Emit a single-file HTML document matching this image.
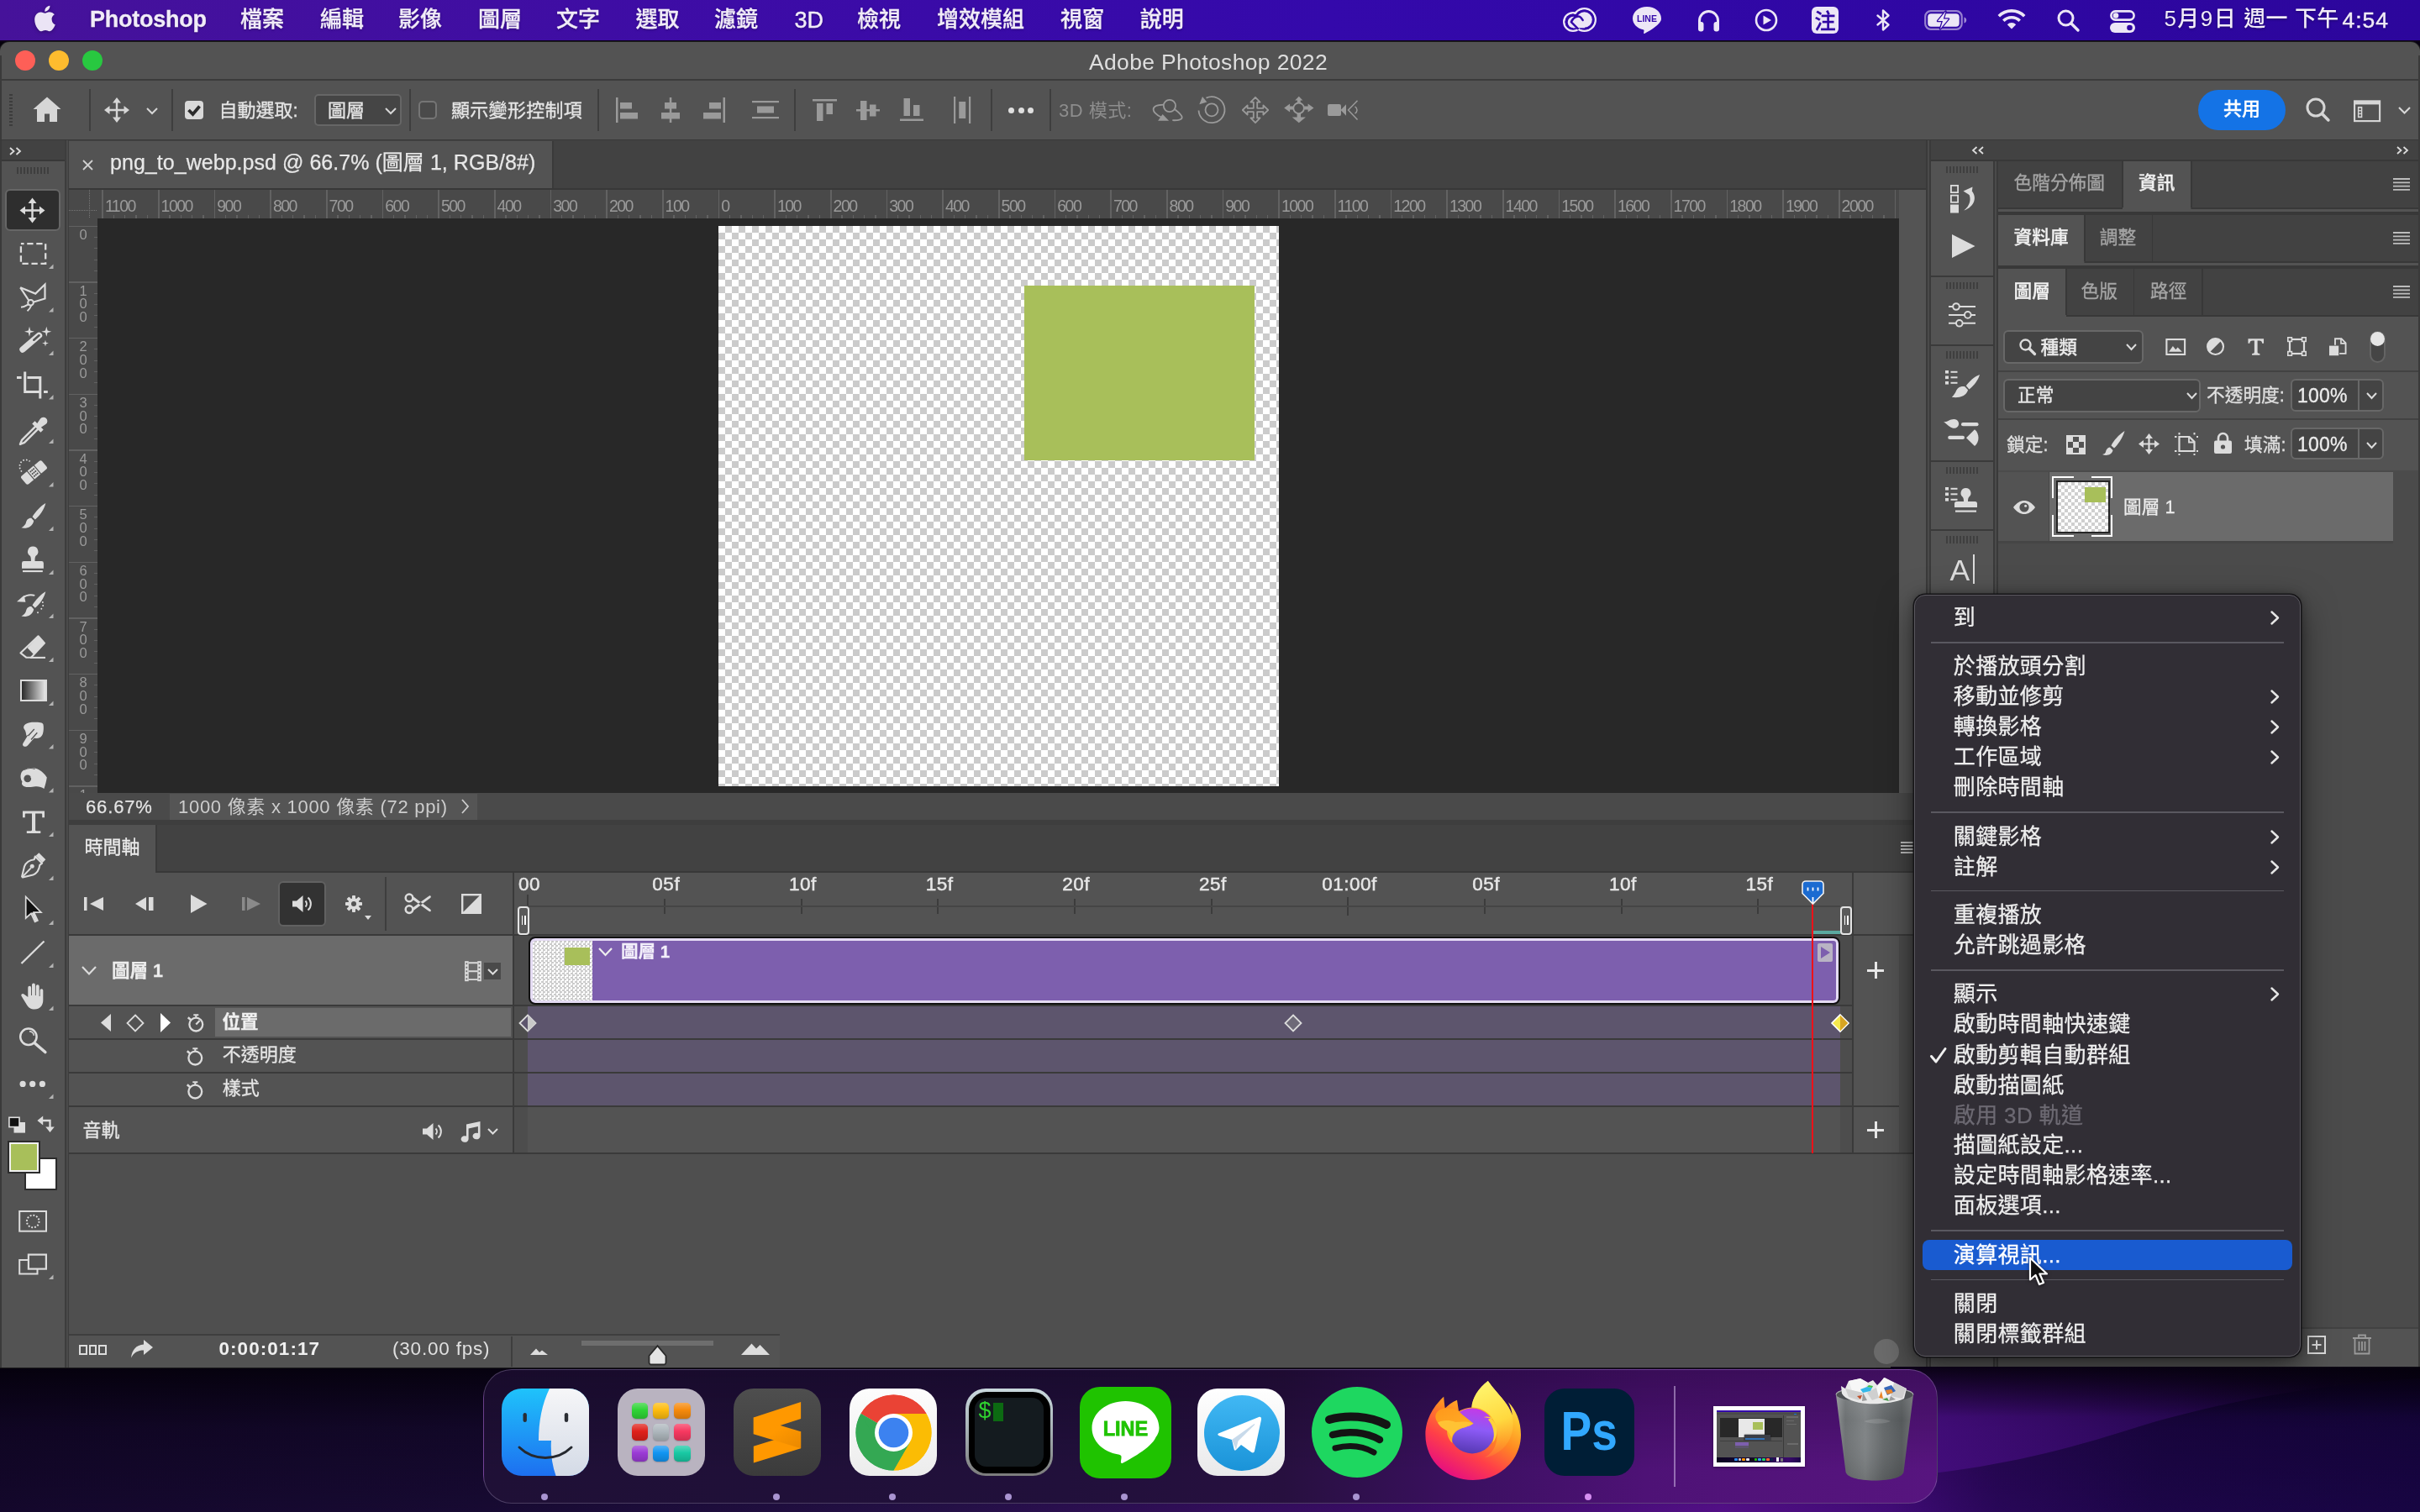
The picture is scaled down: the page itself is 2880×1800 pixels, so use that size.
<!DOCTYPE html>
<html lang="zh-Hant"><head><meta charset="utf-8"><title>Adobe Photoshop 2022</title>
<style>
html,body{margin:0;padding:0;background:#12061f;}
body{width:2880px;height:1800px;overflow:hidden;font-family:"Liberation Sans","Noto Sans CJK TC",sans-serif;}
#root{position:relative;will-change:transform;width:2880px;height:1800px;overflow:hidden;
 background:
  linear-gradient(to bottom, rgba(3,0,8,.85) 1627px, rgba(3,0,8,.25) 1700px, rgba(0,0,0,0) 1800px),
  linear-gradient(100deg,#120628 0%,#170a32 28%,#241046 45%,#3a0c66 62%,#520f86 74%,#3c0a72 82%,#22074f 90%,#1b0648 100%);
}
.a{position:absolute;box-sizing:border-box;}
.t{position:absolute;white-space:nowrap;display:block;}
svg{overflow:visible;}
.cjk{font-family:"Liberation Sans","Noto Sans CJK TC",sans-serif;-webkit-text-stroke:.28px currentColor;}
.chk{background-color:#fff;background-image:
 linear-gradient(45deg,#cbcbcb 25%,transparent 25%,transparent 75%,#cbcbcb 75%),
 linear-gradient(45deg,#cbcbcb 25%,transparent 25%,transparent 75%,#cbcbcb 75%);}
</style>
</head>
<body>
<div id="root">
<div class="a" style="left:0px;top:0px;width:2880px;height:48px;background:linear-gradient(to right,#46129a 0%,#3d0ca6 30%,#3409ab 55%,#2f07a3 80%,#2c069c 100%);"></div>
<div class="a" style="left:0px;top:48px;width:2880px;height:2px;background:#0d0418;"></div>
<svg class="a" style="left:39.8px;top:6px;filter:drop-shadow(0 1px 2px rgba(0,0,0,.3));" width="26" height="32" viewBox="1.2 2 24.6 29.2"><path fill="#ebe4f5" d="M21.6 17.6c0-3.6 3-5.3 3.100-5.400-1.700-2.500-4.300-2.800-5.200-2.800-2.200-.2-4.300 1.300-5.400 1.300s-2.900-1.300-4.700-1.200c-2.400 0-4.700 1.400-5.900 3.600-2.500 4.400-.6 10.800 1.800 14.400 1.200 1.700 2.600 3.700 4.500 3.600 1.800-.1 2.500-1.200 4.700-1.200s2.800 1.200 4.700 1.100c2-.03 3.200-1.800 4.400-3.500 1.400-2 1.900-3.900 2-4-.1 0-3.800-1.500-3.900-5.800zM18 6.700c1-1.200 1.700-2.900 1.500-4.600-1.400.1-3.200 1-4.200 2.200-.9 1-1.700 2.800-1.500 4.400 1.600.1 3.200-.8 4.200-2z"/></svg>
<span class="t " style="top:2.7px;height:40px;line-height:40px;font-size:27px;color:#f1ecf8;left:107px;font-weight:700;letter-spacing:-0.25px;text-shadow:0 1px 3px rgba(0,0,0,.35);-webkit-text-stroke:.3px #f1ecf8;">Photoshop</span>
<span class="t cjk" style="top:3.6px;height:39px;line-height:39px;font-size:26px;color:#f1ecf8;left:286px;font-weight:500;text-shadow:0 1px 3px rgba(0,0,0,.35);">檔案</span>
<span class="t cjk" style="top:3.6px;height:39px;line-height:39px;font-size:26px;color:#f1ecf8;left:381px;font-weight:500;text-shadow:0 1px 3px rgba(0,0,0,.35);">編輯</span>
<span class="t cjk" style="top:3.6px;height:39px;line-height:39px;font-size:26px;color:#f1ecf8;left:474px;font-weight:500;text-shadow:0 1px 3px rgba(0,0,0,.35);">影像</span>
<span class="t cjk" style="top:3.6px;height:39px;line-height:39px;font-size:26px;color:#f1ecf8;left:569px;font-weight:500;text-shadow:0 1px 3px rgba(0,0,0,.35);">圖層</span>
<span class="t cjk" style="top:3.6px;height:39px;line-height:39px;font-size:26px;color:#f1ecf8;left:662px;font-weight:500;text-shadow:0 1px 3px rgba(0,0,0,.35);">文字</span>
<span class="t cjk" style="top:3.6px;height:39px;line-height:39px;font-size:26px;color:#f1ecf8;left:756.5px;font-weight:500;text-shadow:0 1px 3px rgba(0,0,0,.35);">選取</span>
<span class="t cjk" style="top:3.6px;height:39px;line-height:39px;font-size:26px;color:#f1ecf8;left:850px;font-weight:500;text-shadow:0 1px 3px rgba(0,0,0,.35);">濾鏡</span>
<span class="t " style="top:3.5px;height:40px;line-height:40px;font-size:27px;color:#f1ecf8;left:945.5px;text-shadow:0 1px 3px rgba(0,0,0,.35);-webkit-text-stroke:.4px #f1ecf8;">3D</span>
<span class="t cjk" style="top:3.6px;height:39px;line-height:39px;font-size:26px;color:#f1ecf8;left:1020px;font-weight:500;text-shadow:0 1px 3px rgba(0,0,0,.35);">檢視</span>
<span class="t cjk" style="top:3.6px;height:39px;line-height:39px;font-size:26px;color:#f1ecf8;left:1115px;font-weight:500;text-shadow:0 1px 3px rgba(0,0,0,.35);">增效模組</span>
<span class="t cjk" style="top:3.6px;height:39px;line-height:39px;font-size:26px;color:#f1ecf8;left:1262px;font-weight:500;text-shadow:0 1px 3px rgba(0,0,0,.35);">視窗</span>
<span class="t cjk" style="top:3.6px;height:39px;line-height:39px;font-size:26px;color:#f1ecf8;left:1356.7px;font-weight:500;text-shadow:0 1px 3px rgba(0,0,0,.35);">說明</span>
<span class="t " style="top:3.0px;height:39px;line-height:39px;font-size:26px;color:#f1ecf8;left:2575.4px;font-weight:500;letter-spacing:1.5px;text-shadow:0 1px 3px rgba(0,0,0,.35);font-family:'Liberation Sans','Noto Sans CJK TC',sans-serif;">5月9日</span>
<span class="t " style="top:3.0px;height:39px;line-height:39px;font-size:26px;color:#f1ecf8;left:2670.3px;font-weight:500;letter-spacing:0.3px;text-shadow:0 1px 3px rgba(0,0,0,.35);font-family:'Liberation Sans','Noto Sans CJK TC',sans-serif;">週一</span>
<span class="t " style="top:3.0px;height:39px;line-height:39px;font-size:26px;color:#f1ecf8;left:2730.9px;font-weight:500;letter-spacing:0.3px;text-shadow:0 1px 3px rgba(0,0,0,.35);font-family:'Liberation Sans','Noto Sans CJK TC',sans-serif;">下午</span>
<span class="t " style="top:3.5px;height:40px;line-height:40px;font-size:26.5px;color:#f1ecf8;left:2787.4px;letter-spacing:1px;text-shadow:0 1px 3px rgba(0,0,0,.35);font-family:'Liberation Sans','Noto Sans CJK TC',sans-serif;-webkit-text-stroke:.4px #f1ecf8;">4:54</span>
<svg class="a" style="left:1859.5px;top:8.7px;" width="40" height="29.5" viewBox="0 0 40 29.5"><circle cx="12" cy="17" r="10.750" fill="none" stroke="#ece6f6" stroke-width="2.500"/><circle cx="25.500" cy="14.500" r="13.250" fill="none" stroke="#ece6f6" stroke-width="2.500"/><circle cx="12" cy="17" r="9.500" fill="#3308a8"/><circle cx="25.500" cy="14.500" r="12" fill="#3308a8"/><circle cx="12.500" cy="17.500" r="6.800" fill="#ece6f6"/><circle cx="25.500" cy="14.500" r="9.300" fill="#ece6f6"/><path d="M12 17h14v7.300H12z" fill="#ece6f6"/><path d="M9.800 17.200C12 11.500 18.500 8.500 21.500 12l2.200 3M9.800 17.200l8 8" fill="none" stroke="#3308a8" stroke-width="2.400" stroke-linecap="round"/></svg>
<svg class="a" style="left:1942px;top:7px;" width="36" height="34" viewBox="0 0 36 34"><path fill="#ece6f6" d="M18 1C8.600 1 1 7.200 1 14.900c0 6.300 5.200 11.600 12.400 13.300.9.200 1.300.600 1.100 1.500l-.4 2.600c-.1.700.5 1 1.100.6 3-1.700 16-8.200 19.300-15.100.4-1 .5-1.900.5-2.900C35 7.200 27.400 1 18 1z"/><text x="18" y="19" text-anchor="middle" font-family="Liberation Sans, sans-serif" font-weight="700" font-size="10.500" fill="#3409ab">LINE</text></svg>
<svg class="a" style="left:2019px;top:11px;" width="29" height="27" viewBox="0 0 29 27"><g fill="none" stroke="#ece6f6" stroke-width="3"><path d="M3.500 18V13.500a11 11 0 0 1 22 0V18"/></g><rect x="2" y="15" width="6.500" height="11.500" rx="3" fill="#ece6f6"/><rect x="20.500" y="15" width="6.500" height="11.500" rx="3" fill="#ece6f6"/></svg>
<svg class="a" style="left:2088px;top:10px;" width="28" height="28" viewBox="0 0 28 28"><circle cx="14" cy="14" r="12" fill="none" stroke="#ece6f6" stroke-width="2.600"/><path d="M10.500 8.500l9.500 5.500-9.500 5.500z" fill="#ece6f6"/></svg>
<div class="a" style="left:2156px;top:8px;width:32px;height:32px;background:#ece6f6;border-radius:6px;"></div>
<span class="t cjk" style="top:5.6px;height:38px;line-height:38px;font-size:25.5px;color:#2f07a3;left:2156px;font-weight:500;width:32px;text-align:center;">注</span>
<svg class="a" style="left:2232px;top:10px;" width="18" height="28" viewBox="0 0 18 28"><path fill="none" stroke="#ece6f6" stroke-width="2.400" stroke-linejoin="round" stroke-linecap="round" d="M2.500 8.500l13 11-6.500 6V2.500l6.500 6-13 11"/></svg>
<svg class="a" style="left:2290px;top:12px;" width="52" height="24" viewBox="0 0 52 24"><rect x="1.200" y="1.200" width="43.500" height="21.600" rx="6.500" fill="none" stroke="#ece6f6" stroke-opacity=".55" stroke-width="2.200"/><rect x="4.200" y="4.200" width="37.500" height="15.600" rx="4" fill="#ece6f6"/><path d="M47.500 8.500c2 .6 2.700 2 2.700 3.500s-.7 2.900-2.700 3.500z" fill="#ece6f6" fill-opacity=".6"/><path d="M25.500 1.500l-9.500 11.500h6l-3 9.500 10-12h-6.200z" fill="#3007a2" stroke="#3007a2" stroke-width="2.500" stroke-linejoin="round"/><path d="M25.500 1.500l-9.500 11.500h6l-3 9.500 10-12h-6.200z" fill="#ece6f6"/></svg>
<svg class="a" style="left:2377px;top:10px;" width="34" height="25" viewBox="0 0 34 25"><g fill="none" stroke="#ece6f6" stroke-width="3.600" stroke-linecap="butt"><path d="M1.800 9.200a21.500 21.500 0 0 1 30.400 0"/><path d="M7.300 14.800a13.700 13.700 0 0 1 19.400 0"/></g><path d="M17 24.500l-5.200-5.300a7.300 7.300 0 0 1 10.400 0z" fill="#ece6f6"/></svg>
<svg class="a" style="left:2448px;top:11px;" width="27" height="27" viewBox="0 0 27 27"><circle cx="10.500" cy="10.500" r="8.500" fill="none" stroke="#ece6f6" stroke-width="3"/><path d="M17 17l8 8" stroke="#ece6f6" stroke-width="3.400" stroke-linecap="round"/></svg>
<svg class="a" style="left:2511px;top:12px;" width="30" height="27" viewBox="0 0 30 27"><rect x="1.400" y="1.400" width="27.200" height="10.200" rx="5.100" fill="none" stroke="#ece6f6" stroke-width="2.600"/><circle cx="7" cy="6.500" r="3.300" fill="#ece6f6"/><rect x="0" y="15" width="30" height="12" rx="6" fill="#ece6f6"/><circle cx="23.500" cy="21" r="3.300" fill="#3007a2"/></svg>
<div class="a" style="left:0px;top:50px;width:2880px;height:1578px;background:#535353;border-radius:11px 11px 0 0;box-shadow:0 0 0 1px #1c1c1c;"></div>
<div class="a" style="left:0px;top:66px;width:2px;height:1562px;background:#3a3a3a;"></div>
<div class="a" style="left:2878px;top:66px;width:2px;height:1562px;background:#3a3a3a;"></div>
<div class="a" style="left:0px;top:94px;width:2880px;height:2px;background:#3b3b3b;"></div>
<div class="a" style="left:0px;top:165.6px;width:2880px;height:2px;background:#383838;"></div>
<div class="a" style="left:18px;top:60px;width:24px;height:24px;background:#fe5f57;border-radius:50%;"></div>
<div class="a" style="left:58px;top:60px;width:24px;height:24px;background:#febc2e;border-radius:50%;"></div>
<div class="a" style="left:98px;top:60px;width:24px;height:24px;background:#28c840;border-radius:50%;"></div>
<span class="t " style="top:54.0px;height:40px;line-height:40px;font-size:26.5px;color:#dedede;left:0px;letter-spacing:0.35px;width:2876px;text-align:center;">Adobe Photoshop 2022</span>
<div class="a" style="left:11px;top:112px;width:4px;height:38px;background:repeating-linear-gradient(to bottom,#3c3c3c 0 2px,transparent 2px 4px);"></div>
<svg class="a" style="left:39px;top:115px;" width="34" height="31" viewBox="0 0 34 31"><path fill="#d6d6d6" d="M17 0.500L0.500 15h4.500v15h9v-9.500h6V30h9V15h4.500z"/></svg>
<div class="a" style="left:106px;top:106px;width:2px;height:50px;background:#3e3e3e;"></div>
<svg class="a" style="left:124px;top:116px;" width="30" height="30" viewBox="0 0 30 30"><g stroke="#d6d6d6" stroke-width="2.400" fill="none"><path d="M15 4v22M4 15h22"/></g><path fill="#d6d6d6" d="M15 0l5 6.500H10zM15 30l5-6.500H10zM0 15l6.500-5v10zM30 15l-6.500-5v10z"/></svg>
<svg class="a" style="left:174px;top:128px;" width="14" height="9" viewBox="0 0 14 9"><path d="M1 1l6 6 6-6" fill="none" stroke="#d6d6d6" stroke-width="2"/></svg>
<div class="a" style="left:204px;top:106px;width:2px;height:50px;background:#3e3e3e;"></div>
<div class="a" style="left:220px;top:120px;width:22px;height:22px;background:#d9d9d9;border-radius:4px;"></div>
<svg class="a" style="left:223px;top:124px;" width="16" height="14" viewBox="0 0 16 14"><path d="M1.500 7l5 5L14.500 2.500" fill="none" stroke="#2b2b2b" stroke-width="3.800"/></svg>
<span class="t cjk" style="top:115.0px;height:33px;line-height:33px;font-size:22px;color:#e6e6e6;left:260.5px;">自動選取:</span>
<div class="a" style="left:374px;top:112px;width:104px;height:38px;background:#454545;border:2px solid #666;border-radius:5px;"></div>
<span class="t cjk" style="top:115.0px;height:33px;line-height:33px;font-size:22px;color:#e6e6e6;left:390px;">圖層</span>
<svg class="a" style="left:458px;top:128px;" width="14" height="9" viewBox="0 0 14 9"><path d="M1 1l6 6 6-6" fill="none" stroke="#d6d6d6" stroke-width="2"/></svg>
<div class="a" style="left:487px;top:106px;width:2px;height:50px;background:#3e3e3e;"></div>
<div class="a" style="left:498px;top:120px;width:22px;height:22px;background:#4a4a4a;border:2px solid #757575;border-radius:5px;"></div>
<span class="t cjk" style="top:115.0px;height:33px;line-height:33px;font-size:22px;color:#e6e6e6;left:537px;letter-spacing:0.3px;">顯示變形控制項</span>
<div class="a" style="left:711px;top:106px;width:2px;height:50px;background:#3e3e3e;"></div>
<svg class="a" style="left:733px;top:116px;" width="27" height="30" viewBox="0 0 27 30"><rect x="0" y="0" width="2.500" height="30" fill="#9a9a9a"/><rect x="5" y="6" width="14" height="7.500" fill="#9a9a9a"/><rect x="5" y="18" width="21" height="7.500" fill="#9a9a9a"/></svg>
<svg class="a" style="left:787px;top:116px;" width="22" height="30" viewBox="0 0 22 30"><rect x="9.800" y="0" width="2.500" height="30" fill="#9a9a9a"/><rect x="4" y="6" width="14" height="7.500" fill="#9a9a9a"/><rect x="0" y="18" width="22" height="7.500" fill="#9a9a9a"/></svg>
<svg class="a" style="left:837px;top:116px;" width="27" height="30" viewBox="0 0 27 30"><rect x="23.500" y="0" width="2.500" height="30" fill="#9a9a9a"/><rect x="7" y="6" width="14" height="7.500" fill="#9a9a9a"/><rect x="0" y="18" width="21" height="7.500" fill="#9a9a9a"/></svg>
<svg class="a" style="left:895px;top:120px;" width="32" height="22" viewBox="0 0 32 22"><rect x="0" y="0" width="32" height="2.200" fill="#9a9a9a"/><rect x="0" y="19" width="32" height="2.200" fill="#9a9a9a"/><rect x="6" y="6.500" width="20" height="8" fill="#9a9a9a"/></svg>
<div class="a" style="left:945px;top:106px;width:2px;height:50px;background:#3e3e3e;"></div>
<svg class="a" style="left:967px;top:118px;" width="29" height="27" viewBox="0 0 29 27"><rect x="0" y="0" width="29" height="2.500" fill="#9a9a9a"/><rect x="5" y="5" width="7.500" height="21" fill="#9a9a9a"/><rect x="16.500" y="5" width="7.500" height="13" fill="#9a9a9a"/></svg>
<svg class="a" style="left:1019px;top:120px;" width="28" height="23" viewBox="0 0 28 23"><rect x="0" y="10" width="28" height="2.500" fill="#9a9a9a"/><rect x="5" y="0" width="7.500" height="23" fill="#9a9a9a"/><rect x="16" y="4.500" width="7.500" height="14" fill="#9a9a9a"/></svg>
<svg class="a" style="left:1071px;top:117px;" width="28" height="27" viewBox="0 0 28 27"><rect x="0" y="24.500" width="28" height="2.500" fill="#9a9a9a"/><rect x="4.500" y="0" width="7.500" height="21" fill="#9a9a9a"/><rect x="16" y="8" width="7.500" height="13" fill="#9a9a9a"/></svg>
<svg class="a" style="left:1135px;top:115px;" width="20" height="32" viewBox="0 0 20 32"><rect x="0" y="0" width="2.200" height="32" fill="#9a9a9a"/><rect x="18" y="0" width="2.200" height="32" fill="#9a9a9a"/><rect x="6.200" y="6" width="8" height="20" fill="#9a9a9a"/></svg>
<div class="a" style="left:1179px;top:106px;width:2px;height:50px;background:#3e3e3e;"></div>
<div class="a" style="left:1200.0px;top:127.5px;width:7px;height:7px;background:#e0e0e0;border-radius:50%;"></div>
<div class="a" style="left:1211.5px;top:127.5px;width:7px;height:7px;background:#e0e0e0;border-radius:50%;"></div>
<div class="a" style="left:1223.0px;top:127.5px;width:7px;height:7px;background:#e0e0e0;border-radius:50%;"></div>
<div class="a" style="left:1249px;top:106px;width:2px;height:50px;background:#3e3e3e;"></div>
<span class="t " style="top:114.5px;height:33px;line-height:33px;font-size:22px;color:#8d8d8d;left:1260px;letter-spacing:0.5px;">3D 模式:</span>
<svg class="a" style="left:1360px;top:105px;" width="270" height="50" viewBox="1360 105 270 50"><circle cx="1391.900" cy="126" r="7.100" fill="none" stroke="#9a9a9a" stroke-width="1.800"/><path d="M1384.800 124.600C1377 124.800 1372.600 126.800 1372.600 130.200c0 3.400 4 6.600 9.400 9.300M1398.200 130.300c4.700 3.600 8.500 6.700 8.500 9.500 0 2.800-4.500 3.700-11.400 3.400" fill="none" stroke="#9a9a9a" stroke-width="1.800"/><path d="M1383.600 136.100l7.500 7.600h-13z" fill="#9a9a9a"/><circle cx="1442" cy="130.800" r="7.500" fill="none" stroke="#9a9a9a" stroke-width="1.800"/><path d="M1435.500 116.600A15.500 15.500 0 1 1 1426.500 131.500" fill="none" stroke="#9a9a9a" stroke-width="1.800"/><path d="M1431 115l5.300 6.400-9 2.900z" fill="#9a9a9a"/><path d="M1494.0 115.8L1499.6 121.6L1496.2 121.6L1496.2 128.8L1503.4 128.8L1503.4 125.4L1509.2 131.0L1503.4 136.6L1503.4 133.2L1496.2 133.2L1496.2 140.4L1499.6 140.4L1494.0 146.2L1488.4 140.4L1491.8 140.4L1491.8 133.2L1484.6 133.2L1484.6 136.6L1478.8 131.0L1484.6 125.4L1484.6 128.8L1491.8 128.8L1491.8 121.6L1488.4 121.6z" fill="none" stroke="#9a9a9a" stroke-width="1.800" stroke-linejoin="round"/><path d="M1545.800 114.800l4.600 4.600h-2.700v4h-3.800v-4h-2.700zM1528.200 128.500l6.900-5v3.100h4.500v3.800h-4.500v3.100zM1563.500 128.500l-6.900-5v3.100h-4.500v3.800h4.500v3.100zM1545.800 146.300l-8.100-6.700h5.900v-4.500h4.400v4.500h5.900z" fill="#9a9a9a"/><circle cx="1545.600" cy="128.800" r="6.300" fill="#535353" stroke="#9a9a9a" stroke-width="1.800"/><rect x="1580" y="124.100" width="16" height="14" rx="2.200" fill="#9a9a9a"/><path d="M1595.500 131l6.500-6.800v13.600z" fill="#9a9a9a"/><path d="M1615.500 119.700l-11 11.300 11 11.600M1612.500 126.800a4.800 4.800 0 0 1 0 8.400" fill="none" stroke="#9a9a9a" stroke-width="1.500"/></svg>
<div class="a" style="left:2616px;top:107px;width:104px;height:48px;background:#1473e6;border-radius:24px;"></div>
<span class="t cjk" style="top:112.8px;height:33px;line-height:33px;font-size:22px;color:#fff;left:2616px;font-weight:500;width:104px;text-align:center;">共用</span>
<svg class="a" style="left:2743.5px;top:116px;" width="30" height="30" viewBox="0 0 30 30"><circle cx="12" cy="12" r="10" fill="none" stroke="#d6d6d6" stroke-width="3"/><path d="M19.500 19.500l7.400 7.400" stroke="#d6d6d6" stroke-width="3.600" stroke-linecap="round"/></svg>
<svg class="a" style="left:2800.7px;top:119px;" width="32.2" height="26.5" viewBox="0 0 33 26.5"><rect x="1.100" y="1.100" width="30.800" height="24.300" fill="none" stroke="#d6d6d6" stroke-width="2.200"/><rect x="1" y="1" width="31" height="4.200" fill="#d6d6d6"/><rect x="5" y="7.800" width="5.600" height="13.600" fill="#d6d6d6"/><rect x="6.600" y="9.600" width="2.400" height="2.400" fill="#535353"/><rect x="6.600" y="13.400" width="2.400" height="2.400" fill="#535353"/><rect x="6.600" y="17.200" width="2.400" height="2.400" fill="#535353"/></svg>
<svg class="a" style="left:2854px;top:126.8px;" width="15" height="9" viewBox="0 0 15 9"><path d="M1 1l6.500 6.500L14 1" fill="none" stroke="#d6d6d6" stroke-width="2.200"/></svg>
<div class="a" style="left:0px;top:167px;width:2px;height:1461px;background:#3a3a3a;"></div>
<div class="a" style="left:2px;top:167px;width:75px;height:24px;background:#424242;"></div>
<div class="a" style="left:2px;top:190px;width:75px;height:2px;background:#383838;"></div>
<div class="a" style="left:77px;top:167px;width:5px;height:1461px;background:#3d3d3d;"></div>
<div class="a" style="left:78.5px;top:167px;width:2px;height:1461px;background:#4a4a4a;"></div>
<svg class="a" style="left:11px;top:175px;" width="15" height="10" viewBox="0 0 15 10"><path d="M1 1l4.500 4-4.500 4M8.500 1l4.500 4-4.500 4" fill="none" stroke="#dcdcdc" stroke-width="1.800"/></svg>
<div class="a" style="left:20px;top:199px;width:38px;height:8px;background:repeating-linear-gradient(to right,#3e3e3e 0 2px,transparent 2px 4px);"></div>
<div class="a" style="left:6px;top:225px;width:66px;height:50px;background:#2e2e2e;border:2px solid #666;border-radius:6px;"></div>
<svg class="a" style="left:0px;top:220px;" width="80" height="1320" viewBox="0 220 80 1320"><g stroke="#dcdcdc" stroke-width="2.400" fill="none"><path d="M38.500 239.500v22M27.500 250.500h22"/></g><path fill="#dcdcdc" d="M38.500 235.500l5 6.500h-10zM38.500 265.500l5-6.500h-10zM23.500 250.500l6.500-5v10zM53.500 250.500l-6.500-5v10z"/><rect x="24.900" y="290.200" width="29.300" height="23.600" fill="none" stroke="#dcdcdc" stroke-width="2.300" stroke-dasharray="7.300 3.700" stroke-dashoffset="3.650"/><path d="M24.200 342.300l18 7.300L53.500 338.500V355.500L38.500 360" fill="none" stroke="#dcdcdc" stroke-width="2.200" stroke-linejoin="miter"/><path d="M24.200 342.300L34.500 358" fill="none" stroke="#dcdcdc" stroke-width="2.200"/><circle cx="36.500" cy="360.300" r="3.300" fill="#535353" stroke="#dcdcdc" stroke-width="2"/><path d="M33.800 362.300c-2.500 1.500-5.500 3-8.800 3.500M37.300 363.500c-1 2.500-2.500 5-4.800 6.700" fill="none" stroke="#dcdcdc" stroke-width="2"/><path d="M27 416L46.500 399.300" stroke="#dcdcdc" stroke-width="7.400" stroke-linecap="round"/><path d="M40.300 404.700l6.200-5.400" stroke="#535353" stroke-width="2.600" stroke-linecap="round"/><path d="M35.00 388.80L36.27 393.53L41.00 394.80L36.27 396.07L35.00 400.80L33.73 396.07L29.00 394.80L33.73 393.53z" fill="#dcdcdc"/><path d="M55.30 388.80L56.57 393.53L61.30 394.80L56.57 396.07L55.30 400.80L54.03 396.07L49.30 394.80L54.03 393.53z" fill="#dcdcdc"/><path d="M54.00 404.70L54.83 407.77L57.90 408.60L54.83 409.43L54.00 412.50L53.17 409.43L50.10 408.60L53.17 407.77z" fill="#dcdcdc"/><path d="M20 449.500h5.600M29.700 442.500v24h18.100M32.500 449.500h15.300v25M52 466.500h4.800" fill="none" stroke="#dcdcdc" stroke-width="3" stroke-linecap="butt" stroke-linejoin="miter"/><g transform="translate(39.500 510) scale(1.16) translate(-39.700 -510)"><path d="M42.500 507.500L28.300 521.700a2.400 2.400 0 0 0-.7 1.300l-1.300 3.300 3.300-1.300a2.400 2.400 0 0 0 1.300-.7L45.100 510.100" fill="none" stroke="#dcdcdc" stroke-width="2.100" stroke-linejoin="round"/><path d="M38.600 505.300l2.800-2.800 2.400 2.400 3.200-4.800a3.900 3.900 0 0 1 6 -.4 3.900 3.900 0 0 1-.4 6l-4.800 3.200 2.400 2.400-2.800 2.800z" fill="#dcdcdc"/></g><g transform="rotate(-40 40.500 562.500)"><rect x="24.500" y="556" width="32" height="13" rx="2.600" fill="#dcdcdc"/><rect x="34.700" y="555" width="11.600" height="15" fill="#535353"/><rect x="35.900" y="556" width="9.200" height="13" fill="#dcdcdc"/><g fill="#535353"><circle cx="38.100" cy="559" r="1.050"/><circle cx="40.500" cy="559" r="1.050"/><circle cx="42.900" cy="559" r="1.050"/><circle cx="38.100" cy="562.500" r="1.050"/><circle cx="40.500" cy="562.500" r="1.050"/><circle cx="42.900" cy="562.500" r="1.050"/><circle cx="38.100" cy="566" r="1.050"/><circle cx="40.500" cy="566" r="1.050"/><circle cx="42.900" cy="566" r="1.050"/></g></g><path d="M26 561.500c-3.500-3.500-3.500-9 0-12.300 2.800-2.500 7-2.300 9.600.200" fill="none" stroke="#dcdcdc" stroke-width="1.700" stroke-dasharray="1.700 2.100"/><g transform="translate(0 0)"><path d="M54.300 599c-5 2.500-12.500 10.500-15.800 16.300l3.300 3.100c5.200-4 11-12.200 12.500-19.400z" fill="#dcdcdc"/><path d="M37.300 616.800c-3.600-.3-5.600 2.200-6.300 5.200-.5 2.400-2.500 4.500-5.600 6.300 5.800 1.300 13.300-.6 14.800-8.400z" fill="#dcdcdc"/></g><path d="M39.200 650.500a6.100 6.100 0 0 1 3.700 11c-1 .9-1.400 2.600-1.400 4.700v1.800H49.500a2.400 2.400 0 0 1 2.400 2.400v6.400H26v-6.400a2.400 2.400 0 0 1 2.400-2.400H36.900v-1.800c0-2.100-.4-3.800-1.400-4.700a6.100 6.100 0 0 1 3.700-11z" fill="#dcdcdc"/><rect x="27" y="679" width="23.800" height="2.100" fill="#dcdcdc"/><g transform="translate(0 105.3)"><path d="M54.300 599c-5 2.500-12.500 10.500-15.800 16.300l3.300 3.100c5.200-4 11-12.200 12.500-19.400z" fill="#dcdcdc"/><path d="M37.300 616.800c-3.600-.3-5.600 2.200-6.300 5.200-.5 2.400-2.500 4.500-5.600 6.300 5.800 1.300 13.300-.6 14.800-8.400z" fill="#dcdcdc"/></g><path d="M24.500 714.500c3-5 10-7.500 16.800-5.600" fill="none" stroke="#dcdcdc" stroke-width="2"/><path d="M20 716.300l8.800-7.600 1.600 8z" fill="#dcdcdc"/><g fill="#dcdcdc"><circle cx="50.800" cy="717" r="1"/><circle cx="51.200" cy="721" r="1"/><circle cx="49.300" cy="724.800" r="1"/><circle cx="45" cy="729.300" r="1"/></g><path d="M45.500 757.300l7.500 8.300L37 782.800H31.500L24.500 777.300z" fill="none" stroke="#dcdcdc" stroke-width="2.100" stroke-linejoin="round"/><path d="M45.500 757.300l7.500 8.300-12.800 13.600-7.600-8z" fill="#dcdcdc"/><path d="M36 782.900h18" stroke="#dcdcdc" stroke-width="2.100"/><path d="M30.500 862c2.300-1.600 6.500-2.200 10.500-2.200 5.500 0 10 .3 10.500 2.700.6 2.900.6 7.500-.6 11.300-1 3-3.500 5-7 5.300l-3.400-.4-6.700 7.800c-1.300 1.500-3 2.800-5 2.200-1.800-.6-2.300-2.600-1.300-4l6.200-10.200-2.300 1.600c-.5-3.200-.6-5.800-2.700-8.300-1.300-1.600-.4-4.400 1.800-5.800z" fill="#dcdcdc"/><path d="M33.500 876l7.300-8M37 880.500l7.300-8.300" fill="none" stroke="#535353" stroke-width="1.300"/><path d="M25 921c1.300-3.800 5.700-6.700 11.500-7 6.700-.4 13.500 2.800 19.300 11.400-.8 4.600-1.700 8.800-3.400 13.600-3.400-2.700-7.400-3.200-12-2.600-5.400.7-10.600 1.600-13.300-1.300-1.500-1.600-1.300-3.200-.6-4.400-2-2.700-2.500-6.300-1.500-9.700z" fill="#dcdcdc"/><circle cx="32.800" cy="926.800" r="4.400" fill="#535353"/><path d="M28.500 916.500c4-2 9-2.500 13-1" fill="none" stroke="#535353" stroke-width="1.100"/><path d="M36.800 925c2.300 1.300 3.500 3.400 2.600 6.500" fill="none" stroke="#dcdcdc" stroke-width="2"/><path d="M27 965.500h26v7.800h-2.800v-3.600c0-.8-.4-1.200-1.200-1.200H42.100v19.500c0 .8.400 1.200 1.200 1.200h5v2.900H31.800v-2.900h5c.8 0 1.200-.4 1.200-1.200v-19.500H31c-.8 0-1.200.4-1.200 1.200v3.600H27z" fill="#dcdcdc"/><path d="M41.800 1019.500l8.300 8.200-2.800 2.200c-.7 5.500-3.600 9.800-8 11.700l-12.300 2.900-.9-.9 3-12.300c1.900-4.400 6.100-7.300 11.600-8z" fill="none" stroke="#dcdcdc" stroke-width="2.100" stroke-linejoin="round"/><path d="M42.600 1018.700l3.700-3.500 8 8-3.600 3.700z" fill="#dcdcdc"/><path d="M27 1043.500l9.800-10.200" stroke="#dcdcdc" stroke-width="1.900"/><circle cx="38.200" cy="1031.300" r="2.500" fill="#dcdcdc"/><path d="M30.700 1067.500v25.500l6.300-5.600 4.600 10 3.300-1.600-4.600-9.700h8.600z" fill="#111" stroke="#dcdcdc" stroke-width="1.700" stroke-linejoin="miter"/><path d="M37.500 1086.800l4.300 10.200 2.700-1.300-4.400-9.600z" fill="#dcdcdc"/><path d="M25.500 1147l27-26.500" stroke="#dcdcdc" stroke-width="2.300"/><path d="M33.300 1187v-11.300a1.900 1.900 0 0 1 3.800 0v9.300h.9v-12.600a1.950 1.950 0 0 1 3.900 0V1185h.9v-10.800a1.950 1.950 0 0 1 3.900 0V1186h.9v-7a1.850 1.850 0 0 1 3.700 0V1190.500c0 6.700-4 11-10 11-4.700 0-7.700-2-10-6.300l-5.800-9.400c-.9-1.900 1.200-3.700 3-2.200z" fill="#dcdcdc"/><circle cx="33.900" cy="1234.300" r="9.700" fill="none" stroke="#dcdcdc" stroke-width="2.500"/><path d="M41.500 1242l12.300 10.500" stroke="#dcdcdc" stroke-width="3.600" stroke-linecap="round"/><path d="M35 1227.800c3 .3 5 2.300 5.400 5" fill="none" stroke="#dcdcdc" stroke-width="1.400"/><circle cx="27.1" cy="1290.400" r="3.600" fill="#dcdcdc"/><circle cx="38.7" cy="1290.400" r="3.600" fill="#dcdcdc"/><circle cx="50.4" cy="1290.400" r="3.600" fill="#dcdcdc"/><path d="M63.500 314.4v5.500h-5.500z" fill="#b4b4b4"/><path d="M63.500 365.9v5.500h-5.500z" fill="#b4b4b4"/><path d="M63.500 417.4v5.500h-5.500z" fill="#b4b4b4"/><path d="M63.500 469.9v5.500h-5.500z" fill="#b4b4b4"/><path d="M63.500 522.4v5.500h-5.500z" fill="#b4b4b4"/><path d="M63.500 573.9v5.500h-5.500z" fill="#b4b4b4"/><path d="M63.500 626.4v5.500h-5.500z" fill="#b4b4b4"/><path d="M63.500 678.4v5.500h-5.500z" fill="#b4b4b4"/><path d="M63.500 730.4v5.500h-5.500z" fill="#b4b4b4"/><path d="M63.500 782.4v5.500h-5.500z" fill="#b4b4b4"/><path d="M63.500 834.4v5.500h-5.500z" fill="#b4b4b4"/><path d="M63.500 885.9v5.500h-5.500z" fill="#b4b4b4"/><path d="M63.500 937.9v5.500h-5.500z" fill="#b4b4b4"/><path d="M63.500 990.4v5.500h-5.500z" fill="#b4b4b4"/><path d="M63.500 1042.4v5.500h-5.500z" fill="#b4b4b4"/><path d="M63.500 1095.4v5.500h-5.500z" fill="#b4b4b4"/><path d="M63.500 1146.4v5.500h-5.500z" fill="#b4b4b4"/><path d="M63.500 1197.4v5.500h-5.500z" fill="#b4b4b4"/><path d="M63.500 1302.4v5.500h-5.500z" fill="#b4b4b4"/><path d="M63.500 1517.4v5.500h-5.500z" fill="#b4b4b4"/><rect x="16.500" y="1336" width="13.500" height="12.600" fill="#dedede"/><rect x="10.900" y="1330.300" width="12.100" height="11.300" fill="#111" stroke="#dedede" stroke-width="1.600"/><path d="M50 1334h9.500v9" fill="none" stroke="#dcdcdc" stroke-width="2.300"/><path d="M44.400 1334l6.800-5.500v11zM59.500 1348l-5.300-6.500h10.600z" fill="#dcdcdc"/><rect x="23.200" y="1442" width="31.800" height="23.700" fill="none" stroke="#dcdcdc" stroke-width="2"/><circle cx="39.200" cy="1454" r="7.300" fill="none" stroke="#dcdcdc" stroke-width="2" stroke-dasharray="1.900 1.920"/><rect x="23.200" y="1500" width="21.300" height="16.500" fill="none" stroke="#dcdcdc" stroke-width="2"/><rect x="33.900" y="1493.600" width="21" height="17" fill="#535353" stroke="#dcdcdc" stroke-width="2.200"/></svg>
<div class="a" style="left:24px;top:809px;width:31.5px;height:25.5px;background:linear-gradient(to right,#2a2a2a,#e6e6e6);border:2px solid #dcdcdc;"></div>
<div class="a" style="left:28.6px;top:1378px;width:39.2px;height:39.4px;background:#fff;border:2px solid #2c2c2c;"></div>
<div class="a" style="left:8.5px;top:1358px;width:39.2px;height:39.2px;background:#a8bf5a;border:2px solid #2c2c2c;box-shadow:inset 0 0 0 2px #f0f0f0;"></div>
<div class="a" style="left:82px;top:167px;width:2210px;height:58px;background:#424242;"></div>
<div class="a" style="left:82px;top:168px;width:577px;height:56px;background:#535353;border-right:2px solid #3a3a3a;"></div>
<div class="a" style="left:82px;top:224px;width:2210px;height:2px;background:#383838;"></div>
<svg class="a" style="left:98px;top:190px;" width="13" height="13" viewBox="0 0 13 13"><path d="M1 1l11 11M12 1L1 12" stroke="#cfcfcf" stroke-width="1.800"/></svg>
<span class="t " style="top:173.9px;height:38px;line-height:38px;font-size:25px;color:#e8e8e8;left:131px;letter-spacing:0.04px;-webkit-text-stroke:.25px #e8e8e8;">png_to_webp.psd @ 66.7% (圖層 1, RGB/8#)</span>
<div class="a" style="left:2260px;top:226px;width:32px;height:718px;background:#545454;"></div>
<div class="a" style="left:2292px;top:167px;width:2px;height:1461px;background:#3a3a3a;"></div>
<div class="a" style="left:2294px;top:167px;width:2px;height:1461px;background:#4a4a4a;"></div>
<div class="a" style="left:2296px;top:167px;width:2px;height:1461px;background:#3a3a3a;"></div>
<div class="a" style="left:116px;top:226px;width:2144px;height:34px;background:#494949;overflow:hidden;"><div class="a" style="left:0;top:0;width:2220px;height:34px;background:repeating-linear-gradient(to right,#626262 0 1.500px,transparent 1.500px 66.6667px);background-repeat:no-repeat;background-position:-61.30px 0;"></div><div class="a" style="left:0;top:29.500px;width:2160px;height:4.500px;background:repeating-linear-gradient(to right,#626262 0 1.200px,transparent 1.200px 13.3333px);background-repeat:no-repeat;background-position:-7.96px 0;"></div><span class="t" style="left:9.0px;top:7px;height:24px;line-height:24px;font-size:19.500px;letter-spacing:-1.550px;color:#9a9a9a;">1100</span><span class="t" style="left:75.6px;top:7px;height:24px;line-height:24px;font-size:19.500px;letter-spacing:-1.550px;color:#9a9a9a;">1000</span><span class="t" style="left:142.3px;top:7px;height:24px;line-height:24px;font-size:19.500px;letter-spacing:-1.550px;color:#9a9a9a;">900</span><span class="t" style="left:209.0px;top:7px;height:24px;line-height:24px;font-size:19.500px;letter-spacing:-1.550px;color:#9a9a9a;">800</span><span class="t" style="left:275.6px;top:7px;height:24px;line-height:24px;font-size:19.500px;letter-spacing:-1.550px;color:#9a9a9a;">700</span><span class="t" style="left:342.3px;top:7px;height:24px;line-height:24px;font-size:19.500px;letter-spacing:-1.550px;color:#9a9a9a;">600</span><span class="t" style="left:409.0px;top:7px;height:24px;line-height:24px;font-size:19.500px;letter-spacing:-1.550px;color:#9a9a9a;">500</span><span class="t" style="left:475.6px;top:7px;height:24px;line-height:24px;font-size:19.500px;letter-spacing:-1.550px;color:#9a9a9a;">400</span><span class="t" style="left:542.3px;top:7px;height:24px;line-height:24px;font-size:19.500px;letter-spacing:-1.550px;color:#9a9a9a;">300</span><span class="t" style="left:609.0px;top:7px;height:24px;line-height:24px;font-size:19.500px;letter-spacing:-1.550px;color:#9a9a9a;">200</span><span class="t" style="left:675.6px;top:7px;height:24px;line-height:24px;font-size:19.500px;letter-spacing:-1.550px;color:#9a9a9a;">100</span><span class="t" style="left:742.3px;top:7px;height:24px;line-height:24px;font-size:19.500px;letter-spacing:-1.550px;color:#9a9a9a;">0</span><span class="t" style="left:809.0px;top:7px;height:24px;line-height:24px;font-size:19.500px;letter-spacing:-1.550px;color:#9a9a9a;">100</span><span class="t" style="left:875.6px;top:7px;height:24px;line-height:24px;font-size:19.500px;letter-spacing:-1.550px;color:#9a9a9a;">200</span><span class="t" style="left:942.3px;top:7px;height:24px;line-height:24px;font-size:19.500px;letter-spacing:-1.550px;color:#9a9a9a;">300</span><span class="t" style="left:1009.0px;top:7px;height:24px;line-height:24px;font-size:19.500px;letter-spacing:-1.550px;color:#9a9a9a;">400</span><span class="t" style="left:1075.6px;top:7px;height:24px;line-height:24px;font-size:19.500px;letter-spacing:-1.550px;color:#9a9a9a;">500</span><span class="t" style="left:1142.3px;top:7px;height:24px;line-height:24px;font-size:19.500px;letter-spacing:-1.550px;color:#9a9a9a;">600</span><span class="t" style="left:1209.0px;top:7px;height:24px;line-height:24px;font-size:19.500px;letter-spacing:-1.550px;color:#9a9a9a;">700</span><span class="t" style="left:1275.6px;top:7px;height:24px;line-height:24px;font-size:19.500px;letter-spacing:-1.550px;color:#9a9a9a;">800</span><span class="t" style="left:1342.3px;top:7px;height:24px;line-height:24px;font-size:19.500px;letter-spacing:-1.550px;color:#9a9a9a;">900</span><span class="t" style="left:1409.0px;top:7px;height:24px;line-height:24px;font-size:19.500px;letter-spacing:-1.550px;color:#9a9a9a;">1000</span><span class="t" style="left:1475.6px;top:7px;height:24px;line-height:24px;font-size:19.500px;letter-spacing:-1.550px;color:#9a9a9a;">1100</span><span class="t" style="left:1542.3px;top:7px;height:24px;line-height:24px;font-size:19.500px;letter-spacing:-1.550px;color:#9a9a9a;">1200</span><span class="t" style="left:1609.0px;top:7px;height:24px;line-height:24px;font-size:19.500px;letter-spacing:-1.550px;color:#9a9a9a;">1300</span><span class="t" style="left:1675.6px;top:7px;height:24px;line-height:24px;font-size:19.500px;letter-spacing:-1.550px;color:#9a9a9a;">1400</span><span class="t" style="left:1742.3px;top:7px;height:24px;line-height:24px;font-size:19.500px;letter-spacing:-1.550px;color:#9a9a9a;">1500</span><span class="t" style="left:1809.0px;top:7px;height:24px;line-height:24px;font-size:19.500px;letter-spacing:-1.550px;color:#9a9a9a;">1600</span><span class="t" style="left:1875.6px;top:7px;height:24px;line-height:24px;font-size:19.500px;letter-spacing:-1.550px;color:#9a9a9a;">1700</span><span class="t" style="left:1942.3px;top:7px;height:24px;line-height:24px;font-size:19.500px;letter-spacing:-1.550px;color:#9a9a9a;">1800</span><span class="t" style="left:2009.0px;top:7px;height:24px;line-height:24px;font-size:19.500px;letter-spacing:-1.550px;color:#9a9a9a;">1900</span><span class="t" style="left:2075.6px;top:7px;height:24px;line-height:24px;font-size:19.500px;letter-spacing:-1.550px;color:#9a9a9a;">2000</span></div>
<div class="a" style="left:82px;top:226px;width:34px;height:34px;background:#494949;"><div class="a" style="left:0;top:23.500px;width:34px;height:1px;background:repeating-linear-gradient(to right,#777 0 1px,transparent 1px 2px);"></div><div class="a" style="left:23.500px;top:0;width:1px;height:34px;background:repeating-linear-gradient(to bottom,#777 0 1px,transparent 1px 2px);"></div></div>
<div class="a" style="left:82px;top:260px;width:34px;height:684px;background:#494949;overflow:hidden;"><div class="a" style="left:0;top:0;width:34px;height:760px;background:repeating-linear-gradient(to bottom,#626262 0 1.500px,transparent 1.500px 66.6667px);background-repeat:no-repeat;background-position:0 -58.07px;"></div><div class="a" style="left:29.500px;top:0;width:4.500px;height:700px;background:repeating-linear-gradient(to bottom,#626262 0 1.200px,transparent 1.200px 13.3333px);background-repeat:no-repeat;background-position:0 -4.73px;"></div><span class="t" style="left:8px;width:18px;text-align:center;top:8.8px;height:20px;line-height:20px;font-size:16.500px;color:#9a9a9a;">0</span><span class="t" style="left:8px;width:18px;text-align:center;top:75.5px;height:20px;line-height:20px;font-size:16.500px;color:#9a9a9a;">1</span><span class="t" style="left:8px;width:18px;text-align:center;top:91.2px;height:20px;line-height:20px;font-size:16.500px;color:#9a9a9a;">0</span><span class="t" style="left:8px;width:18px;text-align:center;top:106.9px;height:20px;line-height:20px;font-size:16.500px;color:#9a9a9a;">0</span><span class="t" style="left:8px;width:18px;text-align:center;top:142.1px;height:20px;line-height:20px;font-size:16.500px;color:#9a9a9a;">2</span><span class="t" style="left:8px;width:18px;text-align:center;top:157.8px;height:20px;line-height:20px;font-size:16.500px;color:#9a9a9a;">0</span><span class="t" style="left:8px;width:18px;text-align:center;top:173.5px;height:20px;line-height:20px;font-size:16.500px;color:#9a9a9a;">0</span><span class="t" style="left:8px;width:18px;text-align:center;top:208.8px;height:20px;line-height:20px;font-size:16.500px;color:#9a9a9a;">3</span><span class="t" style="left:8px;width:18px;text-align:center;top:224.5px;height:20px;line-height:20px;font-size:16.500px;color:#9a9a9a;">0</span><span class="t" style="left:8px;width:18px;text-align:center;top:240.2px;height:20px;line-height:20px;font-size:16.500px;color:#9a9a9a;">0</span><span class="t" style="left:8px;width:18px;text-align:center;top:275.5px;height:20px;line-height:20px;font-size:16.500px;color:#9a9a9a;">4</span><span class="t" style="left:8px;width:18px;text-align:center;top:291.2px;height:20px;line-height:20px;font-size:16.500px;color:#9a9a9a;">0</span><span class="t" style="left:8px;width:18px;text-align:center;top:306.9px;height:20px;line-height:20px;font-size:16.500px;color:#9a9a9a;">0</span><span class="t" style="left:8px;width:18px;text-align:center;top:342.1px;height:20px;line-height:20px;font-size:16.500px;color:#9a9a9a;">5</span><span class="t" style="left:8px;width:18px;text-align:center;top:357.8px;height:20px;line-height:20px;font-size:16.500px;color:#9a9a9a;">0</span><span class="t" style="left:8px;width:18px;text-align:center;top:373.5px;height:20px;line-height:20px;font-size:16.500px;color:#9a9a9a;">0</span><span class="t" style="left:8px;width:18px;text-align:center;top:408.8px;height:20px;line-height:20px;font-size:16.500px;color:#9a9a9a;">6</span><span class="t" style="left:8px;width:18px;text-align:center;top:424.5px;height:20px;line-height:20px;font-size:16.500px;color:#9a9a9a;">0</span><span class="t" style="left:8px;width:18px;text-align:center;top:440.2px;height:20px;line-height:20px;font-size:16.500px;color:#9a9a9a;">0</span><span class="t" style="left:8px;width:18px;text-align:center;top:475.5px;height:20px;line-height:20px;font-size:16.500px;color:#9a9a9a;">7</span><span class="t" style="left:8px;width:18px;text-align:center;top:491.2px;height:20px;line-height:20px;font-size:16.500px;color:#9a9a9a;">0</span><span class="t" style="left:8px;width:18px;text-align:center;top:506.9px;height:20px;line-height:20px;font-size:16.500px;color:#9a9a9a;">0</span><span class="t" style="left:8px;width:18px;text-align:center;top:542.1px;height:20px;line-height:20px;font-size:16.500px;color:#9a9a9a;">8</span><span class="t" style="left:8px;width:18px;text-align:center;top:557.8px;height:20px;line-height:20px;font-size:16.500px;color:#9a9a9a;">0</span><span class="t" style="left:8px;width:18px;text-align:center;top:573.5px;height:20px;line-height:20px;font-size:16.500px;color:#9a9a9a;">0</span><span class="t" style="left:8px;width:18px;text-align:center;top:608.8px;height:20px;line-height:20px;font-size:16.500px;color:#9a9a9a;">9</span><span class="t" style="left:8px;width:18px;text-align:center;top:624.5px;height:20px;line-height:20px;font-size:16.500px;color:#9a9a9a;">0</span><span class="t" style="left:8px;width:18px;text-align:center;top:640.2px;height:20px;line-height:20px;font-size:16.500px;color:#9a9a9a;">0</span><span class="t" style="left:8px;width:18px;text-align:center;top:675.5px;height:20px;line-height:20px;font-size:16.500px;color:#9a9a9a;">1</span><span class="t" style="left:8px;width:18px;text-align:center;top:691.2px;height:20px;line-height:20px;font-size:16.500px;color:#9a9a9a;">0</span><span class="t" style="left:8px;width:18px;text-align:center;top:706.9px;height:20px;line-height:20px;font-size:16.500px;color:#9a9a9a;">0</span><span class="t" style="left:8px;width:18px;text-align:center;top:722.6px;height:20px;line-height:20px;font-size:16.500px;color:#9a9a9a;">0</span></div>
<div class="a" style="left:116px;top:260px;width:2144px;height:684px;background:#282828;"></div>
<div class="a" style="left:854.7px;top:268.6px;width:667.3px;height:667px;background:repeating-conic-gradient(#cbcbcb 0% 25%,#ffffff 0% 50%) 0 0/16px 16px;"></div>
<div class="a" style="left:1218.7px;top:340.3px;width:274.3px;height:208px;background:#a8bf5a;"></div>
<div class="a" style="left:82px;top:944px;width:2210px;height:32px;background:#4a4a4a;"></div>
<div class="a" style="left:202px;top:945px;width:366px;height:31px;background:#555;"></div>
<span class="t " style="top:943.5px;height:33px;line-height:33px;font-size:22px;color:#e4e4e4;left:102px;letter-spacing:0.85px;-webkit-text-stroke:.25px #e4e4e4;">66.67%</span>
<span class="t " style="top:943.5px;height:33px;line-height:33px;font-size:22px;color:#cdcdcd;left:212px;letter-spacing:0.72px;">1000 像素 x 1000 像素 (72 ppi)</span>
<svg class="a" style="left:549px;top:951px;" width="9" height="18" viewBox="0 0 9 18"><path d="M1 1l7 8-7 8" fill="none" stroke="#cdcdcd" stroke-width="1.800"/></svg>
<div class="a" style="left:82px;top:976px;width:2210px;height:6px;background:#3e3e3e;"></div>
<div class="a" style="left:82px;top:982px;width:2210px;height:646px;background:#4f4f4f;"></div>
<div class="a" style="left:82px;top:982px;width:2210px;height:55px;background:#424242;"></div>
<div class="a" style="left:82px;top:982px;width:104.5px;height:57px;background:#535353;border-right:2px solid #3a3a3a;"></div>
<div class="a" style="left:186px;top:1037px;width:2106px;height:2px;background:#383838;"></div>
<span class="t cjk" style="top:991.5px;height:33px;line-height:33px;font-size:22px;color:#ececec;left:100.5px;">時間軸</span>
<svg class="a" style="left:2262px;top:1001px;" width="15" height="16" viewBox="0 0 15 16"><path d="M0 2h15M0 6h15M0 10h15M0 14h15" stroke="#bdbdbd" stroke-width="1.800"/></svg>
<div class="a" style="left:82px;top:1039px;width:2210px;height:74px;background:#535353;"></div>
<div class="a" style="left:82px;top:1112px;width:2210px;height:2px;background:#3a3a3a;"></div>
<svg class="a" style="left:100px;top:1068px;" width="23" height="16" viewBox="0 0 23 16"><rect x="0" y="0" width="3.500" height="16" fill="#dcdcdc"/><path d="M23 0v16L7 8z" fill="#dcdcdc"/></svg>
<svg class="a" style="left:161px;top:1068px;" width="22" height="16" viewBox="0 0 22 16"><path d="M13 0v16L0 8z" fill="#dcdcdc"/><rect x="16" y="0" width="5.500" height="16" fill="#dcdcdc"/></svg>
<svg class="a" style="left:227px;top:1065px;" width="20" height="22" viewBox="0 0 20 22"><path d="M0 0l19.500 11L0 22z" fill="#dcdcdc"/></svg>
<svg class="a" style="left:288px;top:1068px;" width="22" height="16" viewBox="0 0 22 16"><rect x="0" y="0" width="3.500" height="16" fill="#8a8a8a"/><path d="M6 0v16l16-8z" fill="#8a8a8a"/></svg>
<div class="a" style="left:331px;top:1049px;width:57px;height:54px;background:#323232;border:2px solid #616161;border-radius:6px;"></div>
<svg class="a" style="left:348px;top:1066px;" width="26" height="20" viewBox="0 0 26 20"><path d="M0 6.500h5L12.500 0v20L5 13.500H0z" fill="#dcdcdc"/><path d="M15.500 6.500a5 5 0 0 1 0 7M18.500 2.500a10 10 0 0 1 0 15" fill="none" stroke="#dcdcdc" stroke-width="2"/></svg>
<svg class="a" style="left:411px;top:1065.5px;" width="20" height="20" viewBox="0 0 22 22"><rect x="8.800" y="0" width="4.400" height="5.500" rx=".8" fill="#dcdcdc" transform="rotate(0 11 11)"/><rect x="8.800" y="0" width="4.400" height="5.500" rx=".8" fill="#dcdcdc" transform="rotate(45 11 11)"/><rect x="8.800" y="0" width="4.400" height="5.500" rx=".8" fill="#dcdcdc" transform="rotate(90 11 11)"/><rect x="8.800" y="0" width="4.400" height="5.500" rx=".8" fill="#dcdcdc" transform="rotate(135 11 11)"/><rect x="8.800" y="0" width="4.400" height="5.500" rx=".8" fill="#dcdcdc" transform="rotate(180 11 11)"/><rect x="8.800" y="0" width="4.400" height="5.500" rx=".8" fill="#dcdcdc" transform="rotate(225 11 11)"/><rect x="8.800" y="0" width="4.400" height="5.500" rx=".8" fill="#dcdcdc" transform="rotate(270 11 11)"/><rect x="8.800" y="0" width="4.400" height="5.500" rx=".8" fill="#dcdcdc" transform="rotate(315 11 11)"/><circle cx="11" cy="11" r="5.400" fill="none" stroke="#dcdcdc" stroke-width="4.200"/></svg>
<svg class="a" style="left:434px;top:1090px;" width="8" height="5" viewBox="0 0 8 5"><path d="M0 0h8L4 5z" fill="#dcdcdc"/></svg>
<div class="a" style="left:457.5px;top:1044px;width:2px;height:64px;background:#3e3e3e;"></div>
<svg class="a" style="left:480px;top:1060px;" width="36" height="32" viewBox="480 1060 36 32"><g fill="none" stroke="#dcdcdc" stroke-width="2.500"><circle cx="487" cy="1068.900" r="4.300"/><circle cx="487" cy="1082.600" r="4.300"/></g><path d="M490.300 1070.300l2.200-2.600 19.600 14.800c1.500 1.200.6 3.300-1.300 2.600zM490.300 1081.200l2.200 2.600 19.600-14.800c1.500-1.200.6-3.300-1.300-2.600z" fill="#dcdcdc"/></svg>
<svg class="a" style="left:549px;top:1064px;" width="24" height="24" viewBox="0 0 24 24"><rect x="1.200" y="1.200" width="21.600" height="21.600" fill="none" stroke="#dcdcdc" stroke-width="2.400"/><path d="M22.500 1.500v21h-21z" fill="#dcdcdc"/></svg>
<div class="a" style="left:610px;top:1039px;width:2px;height:334px;background:#3a3a3a;"></div>
<span class="t " style="top:1035.5px;height:34px;line-height:34px;font-size:22.5px;color:#e6e6e6;left:617px;letter-spacing:0.5px;-webkit-text-stroke:.5px #e6e6e6;">00</span>
<div class="a" style="left:627.3px;top:1065px;width:2px;height:13px;background:#3c3c3c;"></div>
<span class="t " style="top:1035.5px;height:34px;line-height:34px;font-size:22.5px;color:#e6e6e6;left:732.7499999999999px;letter-spacing:0.5px;width:120px;text-align:center;-webkit-text-stroke:.5px #e6e6e6;">05f</span>
<div class="a" style="left:789.9499999999999px;top:1070px;width:2px;height:18px;background:#3c3c3c;"></div>
<span class="t " style="top:1035.5px;height:34px;line-height:34px;font-size:22.5px;color:#e6e6e6;left:895.3999999999999px;letter-spacing:0.5px;width:120px;text-align:center;-webkit-text-stroke:.5px #e6e6e6;">10f</span>
<div class="a" style="left:952.5999999999999px;top:1070px;width:2px;height:18px;background:#3c3c3c;"></div>
<span class="t " style="top:1035.5px;height:34px;line-height:34px;font-size:22.5px;color:#e6e6e6;left:1058.05px;letter-spacing:0.5px;width:120px;text-align:center;-webkit-text-stroke:.5px #e6e6e6;">15f</span>
<div class="a" style="left:1115.25px;top:1070px;width:2px;height:18px;background:#3c3c3c;"></div>
<span class="t " style="top:1035.5px;height:34px;line-height:34px;font-size:22.5px;color:#e6e6e6;left:1220.7px;letter-spacing:0.5px;width:120px;text-align:center;-webkit-text-stroke:.5px #e6e6e6;">20f</span>
<div class="a" style="left:1277.9px;top:1070px;width:2px;height:18px;background:#3c3c3c;"></div>
<span class="t " style="top:1035.5px;height:34px;line-height:34px;font-size:22.5px;color:#e6e6e6;left:1383.35px;letter-spacing:0.5px;width:120px;text-align:center;-webkit-text-stroke:.5px #e6e6e6;">25f</span>
<div class="a" style="left:1440.55px;top:1070px;width:2px;height:18px;background:#3c3c3c;"></div>
<span class="t " style="top:1035.5px;height:34px;line-height:34px;font-size:22.5px;color:#e6e6e6;left:1546.0px;letter-spacing:0.5px;width:120px;text-align:center;-webkit-text-stroke:.5px #e6e6e6;">01:00f</span>
<div class="a" style="left:1603.2px;top:1068px;width:2px;height:22px;background:#3c3c3c;"></div>
<span class="t " style="top:1035.5px;height:34px;line-height:34px;font-size:22.5px;color:#e6e6e6;left:1708.6499999999999px;letter-spacing:0.5px;width:120px;text-align:center;-webkit-text-stroke:.5px #e6e6e6;">05f</span>
<div class="a" style="left:1765.85px;top:1070px;width:2px;height:18px;background:#3c3c3c;"></div>
<span class="t " style="top:1035.5px;height:34px;line-height:34px;font-size:22.5px;color:#e6e6e6;left:1871.3px;letter-spacing:0.5px;width:120px;text-align:center;-webkit-text-stroke:.5px #e6e6e6;">10f</span>
<div class="a" style="left:1928.5px;top:1070px;width:2px;height:18px;background:#3c3c3c;"></div>
<span class="t " style="top:1035.5px;height:34px;line-height:34px;font-size:22.5px;color:#e6e6e6;left:2033.95px;letter-spacing:0.5px;width:120px;text-align:center;-webkit-text-stroke:.5px #e6e6e6;">15f</span>
<div class="a" style="left:2091.15px;top:1070px;width:2px;height:18px;background:#3c3c3c;"></div>
<div class="a" style="left:628px;top:1078px;width:1562px;height:2px;background:#454545;"></div>
<div class="a" style="left:616px;top:1079px;width:14px;height:34px;background:#5a5a5a;border:2px solid #e4e4e4;border-radius:4px;"><div class="a" style="left:2.500px;top:9px;width:1.800px;height:11px;background:#fff"></div><div class="a" style="left:6px;top:9px;width:1.800px;height:11px;background:#fff"></div></div>
<div class="a" style="left:2158px;top:1107.5px;width:32px;height:4px;background:#5ba8a0;"></div>
<div class="a" style="left:2190px;top:1079px;width:14px;height:34px;background:#5a5a5a;border:2px solid #e4e4e4;border-radius:4px;"><div class="a" style="left:2.500px;top:9px;width:1.800px;height:11px;background:#fff"></div><div class="a" style="left:6px;top:9px;width:1.800px;height:11px;background:#fff"></div></div>
<div class="a" style="left:82px;top:1114px;width:528px;height:82px;background:#6b6b6b;"></div>
<div class="a" style="left:82px;top:1196px;width:2123px;height:2px;background:#3a3a3a;"></div>
<div class="a" style="left:612px;top:1114px;width:1593px;height:82px;background:#4b4b4b;"></div>
<svg class="a" style="left:97px;top:1150px;" width="18" height="11" viewBox="0 0 18 11"><path d="M1 1l8 8.500L17 1" fill="none" stroke="#dcdcdc" stroke-width="2.200"/></svg>
<span class="t cjk" style="top:1140.0px;height:32px;line-height:32px;font-size:21.5px;color:#ededed;left:133px;font-weight:700;">圖層 1</span>
<svg class="a" style="left:552px;top:1143px;" width="22" height="26" viewBox="552 1143 22 26"><rect x="553.100" y="1144.200" width="4.600" height="24" fill="#dcdcdc"/><rect x="568.200" y="1144.200" width="4.600" height="24" fill="#dcdcdc"/><path d="M557.500 1146.300h11M557.500 1156.200h11M557.500 1166.100h11" stroke="#dcdcdc" stroke-width="1.900"/><rect x="554.5" y="1146.3" width="1.700" height="1.900" fill="#6b6b6b"/><rect x="554.5" y="1150.8" width="1.700" height="1.900" fill="#6b6b6b"/><rect x="554.5" y="1155.3" width="1.700" height="1.900" fill="#6b6b6b"/><rect x="554.5" y="1159.8" width="1.700" height="1.900" fill="#6b6b6b"/><rect x="554.5" y="1164.3" width="1.700" height="1.900" fill="#6b6b6b"/><rect x="569.6" y="1146.3" width="1.700" height="1.900" fill="#6b6b6b"/><rect x="569.6" y="1150.8" width="1.700" height="1.900" fill="#6b6b6b"/><rect x="569.6" y="1155.3" width="1.700" height="1.900" fill="#6b6b6b"/><rect x="569.6" y="1159.8" width="1.700" height="1.900" fill="#6b6b6b"/><rect x="569.6" y="1164.3" width="1.700" height="1.900" fill="#6b6b6b"/></svg>
<div class="a" style="left:576px;top:1146px;width:20px;height:20px;background:#4a4a4a;"></div>
<svg class="a" style="left:579.5px;top:1153px;" width="13" height="8" viewBox="0 0 13 8"><path d="M1 1l5.500 5.500L12 1" fill="none" stroke="#dcdcdc" stroke-width="2"/></svg>
<div class="a" style="left:82px;top:1198px;width:528px;height:38px;background:#535353;"></div>
<div class="a" style="left:82px;top:1236px;width:2123px;height:2px;background:#3a3a3a;"></div>
<div class="a" style="left:612px;top:1198px;width:1593px;height:38px;background:#4d4d4d;"></div>
<div class="a" style="left:628px;top:1198px;width:1562px;height:38px;background:#5d556d;"></div>
<div class="a" style="left:82px;top:1238px;width:528px;height:38px;background:#535353;"></div>
<div class="a" style="left:82px;top:1276px;width:2123px;height:2px;background:#3a3a3a;"></div>
<div class="a" style="left:612px;top:1238px;width:1593px;height:38px;background:#4d4d4d;"></div>
<div class="a" style="left:628px;top:1238px;width:1562px;height:38px;background:#5d556d;"></div>
<div class="a" style="left:82px;top:1278px;width:528px;height:38px;background:#535353;"></div>
<div class="a" style="left:82px;top:1316px;width:2123px;height:2px;background:#3a3a3a;"></div>
<div class="a" style="left:612px;top:1278px;width:1593px;height:38px;background:#4d4d4d;"></div>
<div class="a" style="left:628px;top:1278px;width:1562px;height:38px;background:#5d556d;"></div>
<div class="a" style="left:256px;top:1200px;width:352px;height:34px;background:#6b6b6b;"></div>
<svg class="a" style="left:119.5px;top:1207px;" width="12" height="21" viewBox="0 0 12 21"><path d="M12 0v21L0 10.500z" fill="#dcdcdc"/></svg>
<svg class="a" style="left:149.5px;top:1206.5px;" width="22" height="22" viewBox="0 0 22 22"><path d="M11 1.500L20.500 11 11 20.500 1.500 11z" fill="none" stroke="#dcdcdc" stroke-width="1.800"/></svg>
<svg class="a" style="left:191px;top:1206px;" width="12" height="23" viewBox="0 0 12 23"><path d="M0 0v23l12-11.500z" fill="#fff"/></svg>
<svg class="a" style="left:221.7px;top:1204.5px;" width="22" height="24" viewBox="0 0 22 24"><circle cx="11.300" cy="14.600" r="7.900" fill="none" stroke="#dcdcdc" stroke-width="2.300"/><path d="M8.300 3.300h6M11.300 3.300v3.500" stroke="#dcdcdc" stroke-width="2" fill="none"/><path d="M1.800 6.200l3.600 3.200" stroke="#dcdcdc" stroke-width="2.600"/><path d="M11.300 14.600l4.300-4.600" stroke="#dcdcdc" stroke-width="2.200"/></svg>
<span class="t cjk" style="top:1201.0px;height:32px;line-height:32px;font-size:21.5px;color:#f0f0f0;left:264.5px;font-weight:700;">位置</span>
<svg class="a" style="left:220.7px;top:1244.5px;" width="22" height="24" viewBox="0 0 22 24"><circle cx="11.300" cy="14.600" r="7.900" fill="none" stroke="#dcdcdc" stroke-width="2.300"/><path d="M8.300 3.300h6M11.300 3.300v3.500" stroke="#dcdcdc" stroke-width="2" fill="none"/><path d="M1.800 6.200l3.600 3.200" stroke="#dcdcdc" stroke-width="2.600"/></svg>
<span class="t cjk" style="top:1239.3px;height:33px;line-height:33px;font-size:22px;color:#e6e6e6;left:264.8px;">不透明度</span>
<svg class="a" style="left:220.7px;top:1284.5px;" width="22" height="24" viewBox="0 0 22 24"><circle cx="11.300" cy="14.600" r="7.900" fill="none" stroke="#dcdcdc" stroke-width="2.300"/><path d="M8.300 3.300h6M11.300 3.300v3.500" stroke="#dcdcdc" stroke-width="2" fill="none"/><path d="M1.800 6.200l3.600 3.200" stroke="#dcdcdc" stroke-width="2.600"/></svg>
<span class="t cjk" style="top:1279.3px;height:33px;line-height:33px;font-size:22px;color:#e6e6e6;left:264.8px;">樣式</span>
<div class="a" style="left:82px;top:1318px;width:528px;height:54px;background:#535353;"></div>
<div class="a" style="left:612px;top:1318px;width:1593px;height:54px;background:#4d4d4d;"></div>
<div class="a" style="left:628px;top:1318px;width:1562px;height:54px;background:#535353;"></div>
<div class="a" style="left:82px;top:1372px;width:2210px;height:2px;background:#3a3a3a;"></div>
<span class="t cjk" style="top:1329.3px;height:33px;line-height:33px;font-size:22px;color:#e6e6e6;left:98.5px;">音軌</span>
<svg class="a" style="left:502.5px;top:1337px;" width="26" height="20" viewBox="0 0 26 20"><path d="M0 6.500h5L12.500 0v20L5 13.500H0z" fill="#dcdcdc"/><path d="M15.500 6.500a5 5 0 0 1 0 7M18.500 2.500a10 10 0 0 1 0 15" fill="none" stroke="#dcdcdc" stroke-width="2"/></svg>
<svg class="a" style="left:547px;top:1335px;" width="25" height="24" viewBox="0 0 25 24"><path d="M8 3.500L24.500 0v17.500a4.500 3.800 0 1 1-2.600-3.400V6L10.600 8.500v12.500a4.500 3.800 0 1 1-2.600-3.400z" fill="#dcdcdc"/></svg>
<svg class="a" style="left:580px;top:1343px;" width="13" height="8" viewBox="0 0 13 8"><path d="M1 1l5.500 5.500L12 1" fill="none" stroke="#dcdcdc" stroke-width="2"/></svg>
<div class="a" style="left:2204px;top:1039px;width:2px;height:334px;background:#3a3a3a;"></div>
<div class="a" style="left:2206px;top:1114px;width:54px;height:258px;background:#535353;"></div>
<div class="a" style="left:2206px;top:1316px;width:54px;height:2px;background:#3a3a3a;"></div>
<div class="a" style="left:2260px;top:1114px;width:32px;height:258px;background:#4b4b4b;"></div>
<div class="a" style="left:2222px;top:1153.5px;width:20px;height:3px;background:#e8e8e8;"></div>
<div class="a" style="left:2230.5px;top:1145px;width:3px;height:20px;background:#e8e8e8;"></div>
<div class="a" style="left:2222px;top:1343.5px;width:20px;height:3px;background:#e8e8e8;"></div>
<div class="a" style="left:2230.5px;top:1335px;width:3px;height:20px;background:#e8e8e8;"></div>
<div class="a" style="left:628.5px;top:1114.5px;width:1561px;height:81px;background:#7d5fae;border-radius:8px;border:2px solid #111;box-shadow:inset 0 0 0 3px #e4dbf3;overflow:hidden;"><div class="a" style="left:3px;top:3px;width:71px;height:71px;border-radius:3px 0 0 3px;background:repeating-conic-gradient(#cbcbcb 0% 25%,#ffffff 0% 50%) 0 0/5px 5px;"></div><div class="a" style="left:41.500px;top:11px;width:29.500px;height:21.500px;background:#a8bf5a"></div></div>
<svg class="a" style="left:711.5px;top:1128px;" width="17" height="10" viewBox="0 0 17 10"><path d="M1 1l7.500 8L16 1" fill="none" stroke="#eee" stroke-width="2.200"/></svg>
<span class="t cjk" style="top:1117.0px;height:31px;line-height:31px;font-size:20.5px;color:#f2eefa;left:739px;font-weight:700;">圖層 1</span>
<div class="a" style="left:2163px;top:1123px;width:18px;height:22px;background:#b9b3c4;border-radius:2px;"></div>
<svg class="a" style="left:2167px;top:1127px;" width="11" height="14" viewBox="0 0 11 14"><path d="M0 0l11 7-11 7z" fill="#7d5fae"/></svg>
<svg class="a" style="left:617.3px;top:1206.5px;" width="22" height="22" viewBox="0 0 22 22"><path d="M11 1.500L20.500 11 11 20.500 1.500 11z" fill="#5d556d" stroke="#dcdcdc" stroke-width="1.800"/><path d="M11 1.500L20.500 11 11 20.500z" fill="#c9c9c9"/></svg>
<svg class="a" style="left:1528.1399999999999px;top:1206.5px;" width="22" height="22" viewBox="0 0 22 22"><path d="M11 1.500L20.500 11 11 20.500 1.500 11z" fill="#6e6a78" stroke="#dcdcdc" stroke-width="1.800"/></svg>
<svg class="a" style="left:2178.74px;top:1206.5px;" width="22" height="22" viewBox="0 0 22 22"><path d="M11 1L21 11 11 21 1 11z" fill="#f6e94d" stroke="#fff" stroke-width="1.600"/><path d="M11 1.800L20.200 11 11 20.200z" fill="#d7a523"/></svg>
<div class="a" style="left:2156px;top:1074px;width:2.4px;height:299px;background:#ee1118;"></div>
<svg class="a" style="left:2143.5px;top:1047.5px;" width="27" height="29" viewBox="0 0 27 29"><path d="M5 1h17a4 4 0 0 1 4 4v10.500L13.500 28 1 15.500V5a4 4 0 0 1 4-4z" fill="#1b6bd1" stroke="#f2f2f2" stroke-width="1.600"/><path d="M7.500 8.500v4M13.500 8.500v4M19.500 8.500v4M13.500 20v7" stroke="#fff" stroke-width="1.800"/></svg>
<div class="a" style="left:82px;top:1588px;width:846px;height:2px;background:#3e3e3e;"></div>
<div class="a" style="left:82px;top:1590px;width:846px;height:38px;background:#535353;"></div>
<div class="a" style="left:94.0px;top:1601.3px;width:9.8px;height:11.5px;border:2.100px solid #dcdcdc;"></div>
<div class="a" style="left:105.7px;top:1601.3px;width:9.8px;height:11.5px;border:2.100px solid #dcdcdc;"></div>
<div class="a" style="left:117.4px;top:1601.3px;width:9.8px;height:11.5px;border:2.100px solid #dcdcdc;"></div>
<svg class="a" style="left:156px;top:1595px;" width="26" height="22" viewBox="0 0 26 22"><path d="M15 0l11 9-11 9v-5.500C8 12.500 3.500 15 0 21.500 1 12 6 6 15 5.500z" fill="#dcdcdc"/></svg>
<span class="t " style="top:1589.0px;height:34px;line-height:34px;font-size:22.5px;color:#f0f0f0;left:260.5px;font-weight:700;letter-spacing:1.05px;">0:00:01:17</span>
<span class="t " style="top:1589.0px;height:34px;line-height:34px;font-size:22.5px;color:#e0e0e0;left:467px;letter-spacing:0.8px;">(30.00 fps)</span>
<div class="a" style="left:608px;top:1591px;width:1.5px;height:36px;background:#3e3e3e;"></div>
<svg class="a" style="left:631px;top:1604px;" width="21" height="9" viewBox="0 0 21 9"><path d="M0 9L7 1.500l4 4.500 3-2.500L21 9z" fill="#dcdcdc"/></svg>
<div class="a" style="left:692px;top:1595.5px;width:157px;height:6.5px;background:#6e6e6e;"></div>
<svg class="a" style="left:771px;top:1600.5px;" width="23" height="25" viewBox="0 0 23 25"><path d="M11.500 1.200L21.500 13v8a2.500 2.500 0 0 1-2.500 2.500H4A2.500 2.500 0 0 1 1.500 21v-8z" fill="#e4e4e4" stroke="#2a2a2a" stroke-width="1.800"/></svg>
<svg class="a" style="left:882px;top:1597.5px;" width="34" height="15" viewBox="0 0 34 15"><path d="M0 15L12.500 1.500l5.500 6L22.500 3 34 15z" fill="#dcdcdc"/></svg>
<div class="a" style="left:2230px;top:1594px;width:30px;height:30px;background:#6b6b6b;border-radius:50%;"></div>
<div class="a" style="left:2298px;top:167px;width:582px;height:1461px;background:#424242;"></div>
<div class="a" style="left:2298px;top:167px;width:582px;height:23px;background:#424242;"></div>
<div class="a" style="left:2298px;top:190px;width:582px;height:2px;background:#383838;"></div>
<svg class="a" style="left:2346.5px;top:174px;" width="14" height="10" viewBox="0 0 14 10"><path d="M5.500 1L1 5l4.500 4M13 1L8.500 5 13 9" fill="none" stroke="#dcdcdc" stroke-width="1.800"/></svg>
<svg class="a" style="left:2851.5px;top:174px;" width="14" height="10" viewBox="0 0 14 10"><path d="M1 1l4.500 4L1 9M8.500 1L13 5 8.500 9" fill="none" stroke="#dcdcdc" stroke-width="1.800"/></svg>
<div class="a" style="left:2298px;top:192px;width:74px;height:1436px;background:#535353;"></div>
<div class="a" style="left:2372px;top:192px;width:2px;height:1436px;background:#3a3a3a;"></div>
<div class="a" style="left:2374px;top:192px;width:2px;height:1436px;background:#4a4a4a;"></div>
<div class="a" style="left:2376px;top:192px;width:1.6px;height:1436px;background:#3a3a3a;"></div>
<div class="a" style="left:2298px;top:328px;width:74px;height:2px;background:#3a3a3a;"></div>
<div class="a" style="left:2298px;top:410px;width:74px;height:2px;background:#3a3a3a;"></div>
<div class="a" style="left:2298px;top:547.5px;width:74px;height:2px;background:#3a3a3a;"></div>
<div class="a" style="left:2298px;top:630px;width:74px;height:2px;background:#3a3a3a;"></div>
<div class="a" style="left:2316px;top:197.5px;width:38px;height:8.5px;background:repeating-linear-gradient(to right,#3f3f3f 0 2px,transparent 2px 4px);"></div>
<div class="a" style="left:2316px;top:335.5px;width:38px;height:8.5px;background:repeating-linear-gradient(to right,#3f3f3f 0 2px,transparent 2px 4px);"></div>
<div class="a" style="left:2316px;top:418px;width:38px;height:8.5px;background:repeating-linear-gradient(to right,#3f3f3f 0 2px,transparent 2px 4px);"></div>
<div class="a" style="left:2316px;top:555.5px;width:38px;height:8.5px;background:repeating-linear-gradient(to right,#3f3f3f 0 2px,transparent 2px 4px);"></div>
<div class="a" style="left:2316px;top:638px;width:38px;height:8.5px;background:repeating-linear-gradient(to right,#3f3f3f 0 2px,transparent 2px 4px);"></div>
<svg class="a" style="left:2320px;top:219px;" width="31" height="35" viewBox="0 0 31 35"><g fill="none" stroke="#dcdcdc" stroke-width="1.800"><rect x="1.900" y="1.900" width="8.200" height="8.200"/><rect x="1.900" y="13.600" width="8.200" height="8.200"/></g><rect x="1" y="24.500" width="10" height="10" fill="#dcdcdc"/><path d="M16.500 8.500L27.500 3.500 26 14.500z" fill="#dcdcdc"/><path d="M26.800 8.500C33 16 30 27 17.300 31.600 24.500 26 26.500 17.500 22.800 11.500z" fill="#dcdcdc"/></svg>
<svg class="a" style="left:2322.5px;top:279px;" width="28" height="28" viewBox="0 0 28 28"><path d="M0 0l27.500 14L0 28z" fill="#dcdcdc"/></svg>
<svg class="a" style="left:2319px;top:360px;" width="33" height="31" viewBox="0 0 33 31"><g fill="none" stroke="#dcdcdc" stroke-width="2"><path d="M0 5h32M0 14.900h32M0 24.800h32"/><circle cx="9" cy="5" r="3.800" fill="#535353"/><circle cx="22.800" cy="14.900" r="3.800" fill="#535353"/><circle cx="12.800" cy="24.800" r="3.800" fill="#535353"/></g></svg>
<svg class="a" style="left:2315px;top:440px;" width="42" height="34" viewBox="0 0 42 34"><g fill="#dcdcdc"><rect x="0" y="1" width="4" height="3.600"/><rect x="0" y="7.500" width="4" height="3.600"/><rect x="0" y="14" width="4" height="3.600"/><rect x="6.500" y="1.800" width="8" height="2"/><rect x="6.500" y="8.300" width="8" height="2"/><rect x="6.500" y="14.800" width="8" height="2"/><path d="M41 6.100C35.500 8 28.500 14 24.800 19.300l3.700 4.200C34 19.500 39.500 12 41 6.100z"/><path d="M23.300 20.300c-5-1-8.800 1.400-10.300 5-1 2.500-2.700 5.300-5.200 7.500 7.500 1.200 16.800-.3 19.300-8.500z"/></g></svg>
<svg class="a" style="left:2313px;top:499px;" width="42" height="32" viewBox="0 0 42 32"><g fill="#dcdcdc"><path d="M0 3.500c4.500 0 7.500-3.500 12.500-3.500 6.500 0 8 9.500 1 10.800C8 11.500 4.500 5.500 0 3.500z"/><rect x="21" y="4" width="20.600" height="4.300" rx="2.100"/><rect x="5.200" y="19.800" width="19.800" height="4.300" rx="2.100"/><path d="M27 22.200l10-9.900c6 5 6 15 0 19.700z"/></g></svg>
<svg class="a" style="left:2315px;top:579px;" width="38" height="33" viewBox="0 0 38 33"><g fill="#dcdcdc"><rect x="0" y="1" width="4" height="3.600"/><rect x="0" y="7.500" width="4" height="3.600"/><rect x="0" y="14" width="4" height="3.600"/><rect x="6.500" y="1.800" width="8" height="2"/><rect x="6.500" y="8.300" width="8" height="2"/><rect x="6.500" y="14.800" width="8" height="2"/><path d="M24.500 2a6 6 0 0 1 3.700 10.700c-1 1-1.200 3-1.200 5.300H35.500a2.500 2.500 0 0 1 2.500 2.500V25H11v-4.500A2.500 2.500 0 0 1 13.500 18H22c0-2.300-.2-4.300-1.200-5.300A6 6 0 0 1 24.500 2z"/><rect x="12" y="28.500" width="25" height="2.200"/></g></svg>
<span class="t " style="top:652.5px;height:53px;line-height:53px;font-size:35.5px;color:#dcdcdc;left:2320.5px;">A</span>
<div class="a" style="left:2347.5px;top:660px;width:2px;height:35px;background:#dcdcdc;"></div>
<div class="a" style="left:2378px;top:192px;width:502px;height:55px;background:#424242;"></div>
<div class="a" style="left:2526px;top:192px;width:81px;height:57px;background:#535353;"></div>
<div class="a" style="left:2525px;top:192px;width:1.5px;height:55px;background:#383838;"></div>
<div class="a" style="left:2607px;top:192px;width:1.5px;height:55px;background:#383838;"></div>
<div class="a" style="left:2378px;top:247px;width:148px;height:2px;background:#383838;"></div>
<div class="a" style="left:2608px;top:247px;width:272px;height:2px;background:#383838;"></div>
<div class="a" style="left:2378px;top:249px;width:502px;height:3px;background:#535353;"></div>
<div class="a" style="left:2378px;top:252px;width:502px;height:4px;background:#383838;"></div>
<span class="t cjk" style="top:201.3px;height:33px;line-height:33px;font-size:21.7px;color:#a6a6a6;left:2396.5px;">色階分佈圖</span>
<span class="t cjk" style="top:201.3px;height:33px;line-height:33px;font-size:21.7px;color:#f2f2f2;left:2545px;font-weight:500;">資訊</span>
<svg class="a" style="left:2848px;top:211.5px;" width="20" height="16" viewBox="0 0 20 16"><path d="M0 1h20M0 5.300h20M0 9.600h20M0 13.900h20" stroke="#bdbdbd" stroke-width="1.800"/></svg>
<div class="a" style="left:2378px;top:256px;width:502px;height:55px;background:#424242;"></div>
<div class="a" style="left:2378px;top:256px;width:102px;height:57px;background:#535353;"></div>
<div class="a" style="left:2480px;top:256px;width:1.5px;height:55px;background:#383838;"></div>
<div class="a" style="left:2560.5px;top:256px;width:1.5px;height:55px;background:#383838;"></div>
<div class="a" style="left:2481px;top:311px;width:399px;height:2px;background:#383838;"></div>
<div class="a" style="left:2378px;top:313px;width:502px;height:3px;background:#535353;"></div>
<div class="a" style="left:2378px;top:316px;width:502px;height:4px;background:#383838;"></div>
<span class="t cjk" style="top:265.8px;height:33px;line-height:33px;font-size:21.7px;color:#f2f2f2;left:2396.5px;font-weight:500;">資料庫</span>
<span class="t cjk" style="top:265.8px;height:33px;line-height:33px;font-size:21.7px;color:#a6a6a6;left:2498.7px;">調整</span>
<svg class="a" style="left:2848px;top:275.5px;" width="20" height="16" viewBox="0 0 20 16"><path d="M0 1h20M0 5.300h20M0 9.600h20M0 13.900h20" stroke="#bdbdbd" stroke-width="1.800"/></svg>
<div class="a" style="left:2378px;top:320px;width:502px;height:1308px;background:#535353;"></div>
<div class="a" style="left:2459px;top:320px;width:421px;height:55px;background:#424242;"></div>
<div class="a" style="left:2458px;top:320px;width:1.5px;height:55px;background:#383838;"></div>
<div class="a" style="left:2538.5px;top:320px;width:1.5px;height:55px;background:#383838;"></div>
<div class="a" style="left:2620px;top:320px;width:1.5px;height:55px;background:#383838;"></div>
<div class="a" style="left:2459px;top:374.5px;width:421px;height:2px;background:#383838;"></div>
<span class="t cjk" style="top:330.0px;height:33px;line-height:33px;font-size:21.7px;color:#f2f2f2;left:2396.5px;font-weight:500;">圖層</span>
<span class="t cjk" style="top:330.0px;height:33px;line-height:33px;font-size:21.7px;color:#a6a6a6;left:2476.6px;">色版</span>
<span class="t cjk" style="top:330.0px;height:33px;line-height:33px;font-size:21.7px;color:#a6a6a6;left:2559px;">路徑</span>
<svg class="a" style="left:2848px;top:339.5px;" width="20" height="16" viewBox="0 0 20 16"><path d="M0 1h20M0 5.300h20M0 9.600h20M0 13.900h20" stroke="#bdbdbd" stroke-width="1.800"/></svg>
<div class="a" style="left:2384px;top:393px;width:167px;height:39.5px;background:#444;border:2px solid #686868;border-radius:6px;"></div>
<svg class="a" style="left:2403px;top:403px;" width="20" height="20" viewBox="0 0 20 20"><circle cx="7.500" cy="7.500" r="6" fill="none" stroke="#dcdcdc" stroke-width="2.400"/><path d="M12 12l6.500 6.500" stroke="#dcdcdc" stroke-width="3.200" stroke-linecap="round"/></svg>
<span class="t cjk" style="top:396.5px;height:33px;line-height:33px;font-size:21.7px;color:#eaeaea;left:2428.5px;font-weight:500;">種類</span>
<svg class="a" style="left:2530px;top:409px;" width="13" height="8" viewBox="0 0 13 8"><path d="M1 1l5.5 6 5.5-6" fill="none" stroke="#dcdcdc" stroke-width="2"/></svg>
<svg class="a" style="left:2576.7px;top:403px;" width="24.5" height="20" viewBox="0 0 25 21"><rect x="1.100" y="1.100" width="22.800" height="18.800" fill="none" stroke="#dcdcdc" stroke-width="2.200"/><path d="M4 16.500l5-7 3.500 4.500 2.500-3 5.500 5.500z" fill="#dcdcdc"/></svg>
<svg class="a" style="left:2625.9px;top:402.3px;" width="21.2" height="21.2" viewBox="0 0 22 22"><circle cx="11" cy="11" r="9.800" fill="none" stroke="#dcdcdc" stroke-width="2.200"/><path d="M18.500 3.500A10.600 10.600 0 0 0 3.500 18.500z" fill="#dcdcdc"/></svg>
<svg class="a" style="left:2674.7px;top:403px;" width="19.5" height="20" viewBox="0 0 21 21"><path d="M0.500 0h20v6h-2c-.3-2.300-1.200-3.500-3.800-3.500H12.500V17c0 1.500.8 2 3 2v2h-10v-2c2.200 0 3-.5 3-2V2.500H6.300C3.700 2.500 2.800 3.700 2.500 6h-2z" fill="#dcdcdc"/></svg>
<svg class="a" style="left:2722px;top:401px;" width="23" height="23" viewBox="0 0 23 23"><rect x="3" y="3" width="17" height="17" fill="none" stroke="#dcdcdc" stroke-width="2.200"/><g fill="#535353" stroke="#dcdcdc" stroke-width="1.600"><rect x="0.800" y="0.800" width="4.600" height="4.600"/><rect x="17.600" y="0.800" width="4.600" height="4.600"/><rect x="0.800" y="17.600" width="4.600" height="4.600"/><rect x="17.600" y="17.600" width="4.600" height="4.600"/></g></svg>
<svg class="a" style="left:2772px;top:402px;" width="20.5" height="22" viewBox="0 0 22 23"><path d="M7.500 9V1h8l5.500 5.500V20H13" fill="none" stroke="#dcdcdc" stroke-width="2"/><path d="M15 1v6h6" fill="none" stroke="#dcdcdc" stroke-width="1.800"/><rect x="0" y="10" width="12" height="12.500" fill="#dcdcdc"/></svg>
<div class="a" style="left:2819.5px;top:394px;width:19px;height:37.5px;background:#454545;border:2px solid #646464;border-radius:10px;"></div>
<div class="a" style="left:2820.5px;top:395.2px;width:17px;height:17px;background:#e6e6e6;border-radius:50%;"></div>
<div class="a" style="left:2378px;top:441px;width:502px;height:2px;background:#424242;"></div>
<div class="a" style="left:2384px;top:450.5px;width:235px;height:40.5px;background:#444;border:2px solid #686868;border-radius:6px;"></div>
<span class="t cjk" style="top:454.0px;height:33px;line-height:33px;font-size:21.7px;color:#eaeaea;left:2401px;">正常</span>
<svg class="a" style="left:2602px;top:467px;" width="13" height="8" viewBox="0 0 13 8"><path d="M1 1l5.5 6 5.5-6" fill="none" stroke="#dcdcdc" stroke-width="2"/></svg>
<span class="t cjk" style="top:454.0px;height:33px;line-height:33px;font-size:21.7px;color:#e0e0e0;left:2626px;">不透明度:</span>
<div class="a" style="left:2726.3px;top:450.5px;width:110.4px;height:39px;background:#444;border:2px solid #686868;border-radius:6px;"></div>
<div class="a" style="left:2806px;top:452.5px;width:1.6px;height:35px;background:#686868;"></div>
<span class="t " style="top:453.5px;height:34px;line-height:34px;font-size:23px;color:#ececec;left:2734px;letter-spacing:0.2px;-webkit-text-stroke:.3px #ececec;">100%</span>
<svg class="a" style="left:2815.5px;top:467px;" width="13" height="8" viewBox="0 0 13 8"><path d="M1 1l5.5 6 5.5-6" fill="none" stroke="#dcdcdc" stroke-width="2"/></svg>
<div class="a" style="left:2378px;top:498px;width:502px;height:2px;background:#424242;"></div>
<span class="t cjk" style="top:512.5px;height:33px;line-height:33px;font-size:21.7px;color:#e0e0e0;left:2388px;">鎖定:</span>
<svg class="a" style="left:2458.5px;top:517.5px;" width="23" height="23" viewBox="0 0 23 23"><rect x="1" y="1" width="21" height="21" fill="none" stroke="#dcdcdc" stroke-width="2"/><path d="M1 1h7v7H1zM15 1h7v7h-7zM8 8h7v7H8zM1 15h7v7H1zM15 15h7v7h-7z" fill="#dcdcdc"/></svg>
<svg class="a" style="left:2502px;top:513px;" width="27" height="30" viewBox="0 0 27 30"><path d="M26.500 0C20 4 13 12 10.500 17.500l3.500 3C18 17 24.500 8 26.500 0z" fill="#dcdcdc"/><path d="M9 19.500c-3.500.5-4.500 3.500-5 5.500-.3 1.500-1.800 2.500-4 3 4.500 2 11 1 12.500-5z" fill="#dcdcdc"/></svg>
<svg class="a" style="left:2544.5px;top:516px;" width="25" height="25" viewBox="0 0 25 25"><g stroke="#dcdcdc" stroke-width="2.200" fill="none"><path d="M12.500 4v17M4 12.500h17"/></g><path fill="#dcdcdc" d="M12.500 0l4.500 6h-9zM12.500 25l4.500-6h-9zM0 12.500l6-4.500v9zM25 12.500l-6-4.500v9z"/></svg>
<svg class="a" style="left:2588px;top:515px;" width="28" height="27" viewBox="0 0 28 27"><path d="M5.500 5h12l6 6v11h-18z" fill="none" stroke="#dcdcdc" stroke-width="2.200"/><path d="M17 5v6.500h6.500" fill="none" stroke="#dcdcdc" stroke-width="1.800"/><g stroke="#dcdcdc" stroke-width="2"><path d="M0 5h2.500M5.500 0v2.500M26 5h2M23.500 0v2.500M0 22h2.500M5.500 25v2M26 22h2M23.500 25v2"/></g></svg>
<svg class="a" style="left:2635px;top:514px;" width="21" height="26" viewBox="0 0 21 26"><path d="M5 11V7.500a5.500 5.500 0 0 1 11 0V11" fill="none" stroke="#dcdcdc" stroke-width="2.600"/><rect x="0" y="10.500" width="21" height="15.500" rx="2" fill="#dcdcdc"/><circle cx="10.500" cy="18" r="2.600" fill="#535353"/></svg>
<span class="t cjk" style="top:512.5px;height:33px;line-height:33px;font-size:21.7px;color:#e0e0e0;left:2671px;">填滿:</span>
<div class="a" style="left:2726.3px;top:509px;width:110.4px;height:38.3px;background:#444;border:2px solid #686868;border-radius:6px;"></div>
<div class="a" style="left:2806px;top:511px;width:1.6px;height:34.3px;background:#686868;"></div>
<span class="t " style="top:512.0px;height:34px;line-height:34px;font-size:23px;color:#ececec;left:2734px;letter-spacing:0.2px;-webkit-text-stroke:.3px #ececec;">100%</span>
<svg class="a" style="left:2815.5px;top:525.5px;" width="13" height="8" viewBox="0 0 13 8"><path d="M1 1l5.5 6 5.5-6" fill="none" stroke="#dcdcdc" stroke-width="2"/></svg>
<div class="a" style="left:2378px;top:560px;width:502px;height:1020px;background:#4b4b4b;"></div>
<div class="a" style="left:2378px;top:562px;width:60px;height:81.5px;background:#535353;"></div>
<div class="a" style="left:2438px;top:562px;width:1.2px;height:81.5px;background:#464646;"></div>
<div class="a" style="left:2439px;top:562px;width:409px;height:81.5px;background:#6b6b6b;"></div>
<div class="a" style="left:2378px;top:643.5px;width:470px;height:3px;background:#454545;"></div>
<svg class="a" style="left:2396px;top:596px;" width="26" height="16" viewBox="0 0 26 16"><path d="M0 8C4 2.500 8.500 0 13 0s9 2.500 13 8c-4 5.500-8.500 8-13 8S4 13.500 0 8z" fill="#dcdcdc"/><circle cx="13" cy="8" r="5.600" fill="#535353"/><circle cx="14.600" cy="6.200" r="1.500" fill="#dcdcdc"/></svg>
<svg class="a" style="left:2442px;top:567px;" width="72" height="72" viewBox="0 0 72 72"><path d="M1 26V1h25M47 1h24v25M71 46v25H47M26 71H1V46" fill="none" stroke="#fff" stroke-width="2"/></svg>
<div class="a" style="left:2446.5px;top:571.5px;width:64px;height:63.5px;border:2.500px solid #262626;background:repeating-conic-gradient(#cfcfcf 0% 25%,#ffffff 0% 50%) 4px 0/8px 8px;"></div>
<div class="a" style="left:2480.5px;top:579.5px;width:25px;height:18.5px;background:#a8bf5a;"></div>
<span class="t cjk" style="top:586.9px;height:33px;line-height:33px;font-size:21.7px;color:#ececec;left:2527px;">圖層 1</span>
<div class="a" style="left:2378px;top:1580px;width:502px;height:2px;background:#424242;"></div>
<div class="a" style="left:2378px;top:1582px;width:502px;height:46px;background:#535353;"></div>
<svg class="a" style="left:2746px;top:1590px;" width="22" height="22" viewBox="0 0 22 22"><rect x="1" y="1" width="20" height="20" fill="none" stroke="#dcdcdc" stroke-width="2"/><path d="M11 5.500v11M5.500 11h11" stroke="#dcdcdc" stroke-width="2"/></svg>
<svg class="a" style="left:2800px;top:1588px;" width="22" height="25" viewBox="0 0 22 25"><g fill="none" stroke="#9a9a9a" stroke-width="1.800"><path d="M0 5h22M7 5V1.500h8V5M2.500 5v18.500h17V5M7.500 9v11M11 9v11M14.500 9v11"/></g></svg>
<div class="a" style="left:2878px;top:96px;width:2px;height:1532px;background:#3a3a3a;"></div>
<div class="a" style="left:2278px;top:708px;width:460px;height:907px;background:#312e35;border-radius:13px;border:1.500px solid #5b5960;box-shadow:0 0 0 1.500px #151417,0 14px 40px rgba(0,0,0,.5),0 0 12px rgba(0,0,0,.35);"></div>
<span class="t cjk" style="top:717.2px;height:36px;line-height:36px;font-size:26px;color:#eeeeee;left:2324.8px;letter-spacing:0.35px;">到</span>
<svg class="a" style="left:2702px;top:727.2px;" width="11" height="17" viewBox="0 0 11 17"><path d="M1.500 1.500l7.500 7-7.500 7" fill="none" stroke="#e6e6e6" stroke-width="2.400" stroke-linecap="round" stroke-linejoin="round"/></svg>
<div class="a" style="left:2298px;top:764.4000000000001px;width:420px;height:1.8px;background:#5a5860;"></div>
<span class="t cjk" style="top:774.6px;height:36px;line-height:36px;font-size:26px;color:#eeeeee;left:2324.8px;letter-spacing:0.35px;">於播放頭分割</span>
<span class="t cjk" style="top:810.9px;height:36px;line-height:36px;font-size:26px;color:#eeeeee;left:2324.8px;letter-spacing:0.35px;">移動並修剪</span>
<svg class="a" style="left:2702px;top:820.9px;" width="11" height="17" viewBox="0 0 11 17"><path d="M1.500 1.500l7.500 7-7.500 7" fill="none" stroke="#e6e6e6" stroke-width="2.400" stroke-linecap="round" stroke-linejoin="round"/></svg>
<span class="t cjk" style="top:847.2px;height:36px;line-height:36px;font-size:26px;color:#eeeeee;left:2324.8px;letter-spacing:0.35px;">轉換影格</span>
<svg class="a" style="left:2702px;top:857.2px;" width="11" height="17" viewBox="0 0 11 17"><path d="M1.500 1.500l7.500 7-7.500 7" fill="none" stroke="#e6e6e6" stroke-width="2.400" stroke-linecap="round" stroke-linejoin="round"/></svg>
<span class="t cjk" style="top:883.2px;height:36px;line-height:36px;font-size:26px;color:#eeeeee;left:2324.8px;letter-spacing:0.35px;">工作區域</span>
<svg class="a" style="left:2702px;top:893.2px;" width="11" height="17" viewBox="0 0 11 17"><path d="M1.500 1.500l7.500 7-7.500 7" fill="none" stroke="#e6e6e6" stroke-width="2.400" stroke-linecap="round" stroke-linejoin="round"/></svg>
<span class="t cjk" style="top:919.4px;height:36px;line-height:36px;font-size:26px;color:#eeeeee;left:2324.8px;letter-spacing:0.35px;">刪除時間軸</span>
<div class="a" style="left:2298px;top:965.9000000000001px;width:420px;height:1.8px;background:#5a5860;"></div>
<span class="t cjk" style="top:977.6px;height:36px;line-height:36px;font-size:26px;color:#eeeeee;left:2324.8px;letter-spacing:0.35px;">關鍵影格</span>
<svg class="a" style="left:2702px;top:987.6px;" width="11" height="17" viewBox="0 0 11 17"><path d="M1.500 1.500l7.500 7-7.500 7" fill="none" stroke="#e6e6e6" stroke-width="2.400" stroke-linecap="round" stroke-linejoin="round"/></svg>
<span class="t cjk" style="top:1013.7px;height:36px;line-height:36px;font-size:26px;color:#eeeeee;left:2324.8px;letter-spacing:0.35px;">註解</span>
<svg class="a" style="left:2702px;top:1023.7px;" width="11" height="17" viewBox="0 0 11 17"><path d="M1.500 1.500l7.500 7-7.500 7" fill="none" stroke="#e6e6e6" stroke-width="2.400" stroke-linecap="round" stroke-linejoin="round"/></svg>
<div class="a" style="left:2298px;top:1059.6000000000001px;width:420px;height:1.8px;background:#5a5860;"></div>
<span class="t cjk" style="top:1071.3px;height:36px;line-height:36px;font-size:26px;color:#eeeeee;left:2324.8px;letter-spacing:0.35px;">重複播放</span>
<span class="t cjk" style="top:1107.4px;height:36px;line-height:36px;font-size:26px;color:#eeeeee;left:2324.8px;letter-spacing:0.35px;">允許跳過影格</span>
<div class="a" style="left:2298px;top:1154.0px;width:420px;height:1.8px;background:#5a5860;"></div>
<span class="t cjk" style="top:1165.3px;height:36px;line-height:36px;font-size:26px;color:#eeeeee;left:2324.8px;letter-spacing:0.35px;">顯示</span>
<svg class="a" style="left:2702px;top:1175.3px;" width="11" height="17" viewBox="0 0 11 17"><path d="M1.500 1.500l7.500 7-7.500 7" fill="none" stroke="#e6e6e6" stroke-width="2.400" stroke-linecap="round" stroke-linejoin="round"/></svg>
<span class="t cjk" style="top:1201.3px;height:36px;line-height:36px;font-size:26px;color:#eeeeee;left:2324.8px;letter-spacing:0.35px;">啟動時間軸快速鍵</span>
<span class="t cjk" style="top:1237.5px;height:36px;line-height:36px;font-size:26px;color:#eeeeee;left:2324.8px;letter-spacing:0.35px;">啟動剪輯自動群組</span>
<svg class="a" style="left:2297px;top:1246.5px;" width="20" height="19" viewBox="0 0 20 19"><path d="M1.500 10.500l5.500 6.500L18 1.500" fill="none" stroke="#f0f0f0" stroke-width="3" stroke-linecap="round" stroke-linejoin="round"/></svg>
<span class="t cjk" style="top:1273.5px;height:36px;line-height:36px;font-size:26px;color:#eeeeee;left:2324.8px;letter-spacing:0.35px;">啟動描圖紙</span>
<span class="t cjk" style="top:1309.5px;height:36px;line-height:36px;font-size:26px;color:#6d6a73;left:2324.8px;letter-spacing:0.35px;">啟用 3D 軌道</span>
<span class="t cjk" style="top:1345.3px;height:36px;line-height:36px;font-size:26px;color:#eeeeee;left:2324.8px;letter-spacing:0.35px;">描圖紙設定...</span>
<span class="t cjk" style="top:1381.3px;height:36px;line-height:36px;font-size:26px;color:#eeeeee;left:2324.8px;letter-spacing:0.35px;">設定時間軸影格速率...</span>
<span class="t cjk" style="top:1417.3px;height:36px;line-height:36px;font-size:26px;color:#eeeeee;left:2324.8px;letter-spacing:0.35px;">面板選項...</span>
<div class="a" style="left:2298px;top:1464.0px;width:420px;height:1.8px;background:#5a5860;"></div>
<div class="a" style="left:2288px;top:1476.3px;width:440px;height:35.7px;background:#195bd0;border-radius:8px;"></div>
<span class="t cjk" style="top:1476.2px;height:36px;line-height:36px;font-size:26px;color:#ffffff;left:2324.8px;letter-spacing:0.35px;">演算視訊...</span>
<div class="a" style="left:2298px;top:1522.5px;width:420px;height:1.8px;background:#5a5860;"></div>
<span class="t cjk" style="top:1533.9px;height:36px;line-height:36px;font-size:26px;color:#eeeeee;left:2324.8px;letter-spacing:0.35px;">關閉</span>
<span class="t cjk" style="top:1569.7px;height:36px;line-height:36px;font-size:26px;color:#eeeeee;left:2324.8px;letter-spacing:0.35px;">關閉標籤群組</span>
<svg class="a" style="left:2414px;top:1496px;filter:drop-shadow(0 1px 2px rgba(0,0,0,.5));" width="26" height="36" viewBox="0 0 26 36"><path d="M2 1.500v26l6.500-5.500 4.500 11 5-2-4.600-10.500h8.600z" fill="#111" stroke="#fff" stroke-width="2.200" stroke-linejoin="round"/></svg>
<svg class="a" style="left:2250px;top:1627px;" width="630" height="173" viewBox="0 0 630 173"><defs><linearGradient id="wp1" x1="0" y1="0" x2="1" y2="0"><stop offset="0" stop-color="#4a0f86" stop-opacity=".75"/><stop offset=".55" stop-color="#3a0a72" stop-opacity=".45"/><stop offset="1" stop-color="#2a0660" stop-opacity="0"/></linearGradient><linearGradient id="wp2" x1="0" y1="0" x2="0" y2="1"><stop offset="0" stop-color="#05010c" stop-opacity=".9"/><stop offset="1" stop-color="#05010c" stop-opacity="0"/></linearGradient><linearGradient id="wp3" x1="0" y1="0" x2="1" y2="0"><stop offset="0" stop-color="#12033a" stop-opacity="0"/><stop offset=".2" stop-color="#12033a" stop-opacity=".35"/><stop offset="1" stop-color="#12033a" stop-opacity=".4"/></linearGradient></defs><path d="M0 0h630v14C520 20 400 40 300 70 200 102 120 122 0 132z" fill="url(#wp1)"/><path d="M0 132C120 122 200 102 300 70 400 40 520 20 630 14v159H0z" fill="url(#wp3)"/><rect x="0" y="0" width="630" height="60" fill="url(#wp2)"/></svg>
<div class="a" style="left:575px;top:1630px;width:1731px;height:160px;background:linear-gradient(to bottom,rgba(8,0,18,.3),rgba(8,0,18,0) 75%),linear-gradient(to right,#1f1036 0%,#21103b 40%,#27103f 55%,#3c1062 68%,#4e1276 80%,#57157f 100%);border-radius:34px;border:1.500px solid rgba(190,175,215,.3);"></div>
<div class="a" style="left:596.5px;top:1653px;width:104px;height:104px;background:linear-gradient(to bottom,#1fc3fb,#1d6ff0);border-radius:24px;overflow:hidden;"><svg class="a" style="left:0px;top:0px;" width="105" height="105" viewBox="0 0 105 105"><defs><linearGradient id="fdr" x1="0" y1="0" x2="0" y2="1"><stop offset="0" stop-color="#f6f6f8"/><stop offset="1" stop-color="#d3dae6"/></linearGradient></defs><path d="M57 0C48 18 44 40 44 62h15c-1 14 1 30 6 43h40V0z" fill="url(#fdr)"/><path d="M57 0C48 18 44 40 44 62h15" fill="none" stroke="#1a3b6b" stroke-width="0"/><rect x="25.500" y="29" width="4.400" height="11" rx="2.200" fill="#2a2d33"/><rect x="74.800" y="29" width="4.400" height="11" rx="2.200" fill="#2a2d33"/><path d="M21 70c17 16.500 45 16.500 62 0" fill="none" stroke="#25282e" stroke-width="3" stroke-linecap="round"/></svg></div>
<div class="a" style="left:734.8px;top:1653px;width:104px;height:104px;background:#b9b3c0;border-radius:24px;"><div class="a" style="left:17.0px;top:17.1px;width:19.200px;height:19.200px;border-radius:5px;background:linear-gradient(to bottom,rgba(255,255,255,.28),rgba(255,255,255,0) 45%,rgba(0,0,0,.16)),#2fd436;box-shadow:0 1px 1.500px rgba(0,0,0,.2);"></div><div class="a" style="left:42.3px;top:17.1px;width:19.200px;height:19.200px;border-radius:5px;background:linear-gradient(to bottom,rgba(255,255,255,.28),rgba(255,255,255,0) 45%,rgba(0,0,0,.16)),#fdbc10;box-shadow:0 1px 1.500px rgba(0,0,0,.2);"></div><div class="a" style="left:67.6px;top:17.1px;width:19.200px;height:19.200px;border-radius:5px;background:linear-gradient(to bottom,rgba(255,255,255,.28),rgba(255,255,255,0) 45%,rgba(0,0,0,.16)),#f68a0c;box-shadow:0 1px 1.500px rgba(0,0,0,.2);"></div><div class="a" style="left:17.0px;top:42.400000000000006px;width:19.200px;height:19.200px;border-radius:5px;background:linear-gradient(to bottom,rgba(255,255,255,.28),rgba(255,255,255,0) 45%,rgba(0,0,0,.16)),#e0201a;box-shadow:0 1px 1.500px rgba(0,0,0,.2);"></div><div class="a" style="left:42.3px;top:42.400000000000006px;width:19.200px;height:19.200px;border-radius:5px;background:linear-gradient(to bottom,rgba(255,255,255,.28),rgba(255,255,255,0) 45%,rgba(0,0,0,.16)),#aeb7bd;box-shadow:0 1px 1.500px rgba(0,0,0,.2);"></div><div class="a" style="left:67.6px;top:42.400000000000006px;width:19.200px;height:19.200px;border-radius:5px;background:linear-gradient(to bottom,rgba(255,255,255,.28),rgba(255,255,255,0) 45%,rgba(0,0,0,.16)),#f73860;box-shadow:0 1px 1.500px rgba(0,0,0,.2);"></div><div class="a" style="left:17.0px;top:67.7px;width:19.200px;height:19.200px;border-radius:5px;background:linear-gradient(to bottom,rgba(255,255,255,.28),rgba(255,255,255,0) 45%,rgba(0,0,0,.16)),#9b3bd6;box-shadow:0 1px 1.500px rgba(0,0,0,.2);"></div><div class="a" style="left:42.3px;top:67.7px;width:19.200px;height:19.200px;border-radius:5px;background:linear-gradient(to bottom,rgba(255,255,255,.28),rgba(255,255,255,0) 45%,rgba(0,0,0,.16)),#1295f2;box-shadow:0 1px 1.500px rgba(0,0,0,.2);"></div><div class="a" style="left:67.6px;top:67.7px;width:19.200px;height:19.200px;border-radius:5px;background:linear-gradient(to bottom,rgba(255,255,255,.28),rgba(255,255,255,0) 45%,rgba(0,0,0,.16)),#19c9a4;box-shadow:0 1px 1.500px rgba(0,0,0,.2);"></div></div>
<div class="a" style="left:873px;top:1653px;width:104px;height:104px;background:linear-gradient(to bottom,#4e4e4e,#3b3b3b);border-radius:24px;"><svg class="a" style="left:0px;top:0px;" width="105" height="105" viewBox="0 0 105 105"><defs><linearGradient id="sbm" x1="0" y1="0" x2="1" y2="1"><stop offset=".45" stop-color="#ff9800"/><stop offset="1" stop-color="#e98800"/></linearGradient></defs><path d="M23.800 68.700L80.100 51.300v19.900L23.800 88.500z" fill="#ff9800"/><path d="M23.800 34.500L80.100 51.300v19.900L23.800 54.300z" fill="url(#sbm)"/><path d="M23.800 34.500L80.100 16.100V36L23.800 54.300z" fill="#ff9800"/></svg></div>
<div class="a" style="left:1010.8px;top:1653px;width:104px;height:104px;background:linear-gradient(to bottom,#fdfdfd,#ececec);border-radius:24px;"><svg class="a" style="left:7px;top:7px;" width="91" height="91" viewBox="0 0 91 91"><circle cx="45.500" cy="45.500" r="45" fill="#fff"/><path d="M45.500 45.500L6.500 23A45 45 0 0 1 84.500 23z" fill="#ea4335"/><path d="M6.500 23A45 45 0 0 0 45.500 90.500L65 56.800 45.500 45.500z" fill="#34a853"/><path d="M84.500 23A45 45 0 0 1 45.500 90.500L65 56.800 45.500 45.500z" fill="#fbbc04"/><path d="M6.500 23l19.500 33.800L45.500 45.500z" fill="#34a853"/><path d="M45.500 23h39a45 45 0 0 0-78 0z" fill="#ea4335"/><path d="M84.500 23h-39L65 56.800 45.500 90.500A45 45 0 0 0 84.500 23z" fill="#fbbc04"/><path d="M6.500 23A45 45 0 0 0 45.500 90.500L65 56.800H26z" fill="#34a853"/><circle cx="45.500" cy="45.500" r="22.500" fill="#fff"/><circle cx="45.500" cy="45.500" r="17.800" fill="#3c82f0"/></svg></div>
<div class="a" style="left:1149px;top:1653px;width:104px;height:104px;background:linear-gradient(to bottom,#c9d8dd,#a9b4b8 45%,#7c7c7c);border-radius:24px;"><div class="a" style="left:3.500px;top:3.500px;width:97px;height:97px;border-radius:21px;background:#000"></div><div class="a" style="left:11px;top:11px;width:82px;height:82px;border-radius:14px;background:#141b1f"></div><span class="t" style="left:15.500px;top:11px;font-size:27px;line-height:30px;color:#2fd12f;font-weight:400;font-family:'Liberation Sans',sans-serif;">$</span><div class="a" style="left:33px;top:16.500px;width:11.500px;height:22px;background:#0c6a12"></div></div>
<div class="a" style="left:1285px;top:1650.5px;width:109px;height:109px;background:#1fc300;border-radius:24px;"><svg class="a" style="left:0px;top:0px;" width="109" height="109" viewBox="0 0 109 109"><path d="M54.500 17C32 17 14.500 31 14.500 49c0 15.500 13 28.500 31.500 31.500 1.500.3 3 .9 3.400 2 .4 1-.2 4.500-.5 6.500-.2 1.500.8 2.500 2.200 1.800C58 87 85 73 90.500 60c2.500-3.300 4-7 4-11C94.500 31 77 17 54.500 17z" fill="#fff"/><text x="54.500" y="58" text-anchor="middle" font-family="Liberation Sans, sans-serif" font-weight="700" font-size="23.500" fill="#1fc300" stroke="#1fc300" stroke-width=".8" letter-spacing="0">LINE</text></svg></div>
<div class="a" style="left:1425px;top:1653px;width:104px;height:104px;background:linear-gradient(to bottom,#ffffff,#e9e9ea);border-radius:24px;"><svg class="a" style="left:7.5px;top:7.5px;" width="90" height="90" viewBox="0 0 90 90"><defs><linearGradient id="tg" x1="0" y1="0" x2="0" y2="1"><stop offset="0" stop-color="#41b8f4"/><stop offset="1" stop-color="#1a93d8"/></linearGradient></defs><circle cx="45" cy="45" r="45" fill="url(#tg)"/><path d="M17 45.500l48-19.500c2-.8 3.500.5 3 3L60 66.500c-.5 2-2 2.500-3.500 1.500L44 59l-6 6c-1 1-2 .8-2.300-.5L33 53l-14.500-4.500c-2.500-.8-2.800-2-1.500-3z" fill="#fff"/><path d="M33 53l26-18.500c1-.6 1.800 0 1 .8L40.500 54.500 38 65z" fill="#c8daea"/></svg></div>
<div class="a" style="left:1561px;top:1651px;width:108px;height:108px;background:#1ed760;border-radius:50%;"><svg class="a" style="left:0px;top:0px;" width="108" height="108" viewBox="0 0 108 108"><g fill="none" stroke="#141414" stroke-linecap="round"><path d="M21 39c21-6 47-4.500 68 6" stroke-width="10"/><path d="M25 57c18-5 39-3.500 56 6" stroke-width="8.500"/><path d="M28 73c15-4 32-3 46 5" stroke-width="7"/></g></svg></div>
<svg class="a" style="left:1680px;top:1630px;" width="150" height="150" viewBox="0 0 150 150"><defs>
<linearGradient id="ffb" x1=".82" y1=".08" x2=".3" y2=".98"><stop offset="0" stop-color="#fff36b"/><stop offset=".22" stop-color="#ffc32e"/><stop offset=".45" stop-color="#ff8a22"/><stop offset=".72" stop-color="#ff3f48"/><stop offset="1" stop-color="#e60f80"/></linearGradient>
<linearGradient id="ffy" x1=".4" y1="0" x2=".6" y2="1"><stop offset="0" stop-color="#fff56e"/><stop offset=".55" stop-color="#ffd93f"/><stop offset="1" stop-color="#ff9d2c" stop-opacity=".2"/></linearGradient>
<linearGradient id="ffg" x1=".55" y1="0" x2=".4" y2="1"><stop offset="0" stop-color="#c43ae6"/><stop offset=".45" stop-color="#8d5bf7"/><stop offset="1" stop-color="#5538b2"/></linearGradient>
<linearGradient id="ffh" x1=".2" y1="0" x2=".7" y2="1"><stop offset="0" stop-color="#ff9a1c"/><stop offset="1" stop-color="#ffb42a"/></linearGradient>
</defs>
<path d="M38.200 32.700C28 42 16.400 58 16.400 78c0 32 25.600 54 56.600 54 32 0 57-24 57-54 0-16-6-30-15-38.800 3 5.800 4.500 10.800 4.500 15.300C114 38 100 28 90.800 13.900 80 22 72 34 71.400 45.600 66 46 60 48 56 50L54 36.700c-6 2.300-11 6.300-14.300 9.900-.7-4.600-1.200-9.600-1.500-13.900z" fill="url(#ffb)"/>
<path d="M90.800 13.900C80 22 72 34 71.400 45.600 86 45 99 56 101 72c3 17-5 28-14 33 24-4 38-26 32.500-50.500C114 38 100 28 90.800 13.900z" fill="url(#ffy)"/>
<circle cx="72" cy="73.400" r="27" fill="url(#ffg)"/>
<path d="M39.700 46.600C45 46 52 47 56 50c6 6 12 10 17.500 14.500C68 69 60 69 54 73c-5 4-6.500 9-5.500 15-4.500-4-6.500-10-6.500-15-4-2-9-5-11-9.500-6-8.500-1-15.500 8.700-16.900z" fill="url(#ffh)"/>
<path d="M31 63.500c5-3 14-3.500 21-.5 8-1 16-1 21.500 1.500C68 69 60 69 54 73c-4 3-6 6-6.500 9-1.500-4-3.500-7-5.500-9-4-2-9-5-11-9.500z" fill="#ffc234"/>
<path d="M85.500 57c4.500-1.500 9.500 0 12 2.500-2.500-1-5-1-6.500.5 7 8 8.500 19 5 28 8-9 7-23-2-29.500z" fill="#ffd23c"/>
</svg>
<div class="a" style="left:1838px;top:1653px;width:106.5px;height:104px;background:#001e36;border-radius:24px;"></div>
<span class="t " style="top:1658.5px;height:90px;line-height:90px;font-size:64px;color:#31a8ff;left:1838px;font-weight:700;width:106.5px;text-align:center;transform:scaleX(.86);">Ps</span>
<div class="a" style="left:1992px;top:1650px;width:1.6px;height:120px;background:rgba(220,200,240,.5);"></div>
<div class="a" style="left:2038.9px;top:1674px;width:108.7px;height:71.7px;background:#fff;box-shadow:0 1px 3px rgba(0,0,0,.35);"><div class="a" style="left:4.3px;top:5.2px;width:99.7px;height:61.7px;overflow:hidden;"><div class="a" style="left:0px;top:0px;width:99.7px;height:1.7px;background:#3409ab;"></div><div class="a" style="left:0px;top:1.7px;width:99.7px;height:53.8px;background:#535353;"></div><div class="a" style="left:0px;top:3.2px;width:99.7px;height:1.6px;background:#4a4a4a;"></div><div class="a" style="left:4px;top:8.7px;width:74.1px;height:23.1px;background:#282828;"></div><div class="a" style="left:26px;top:10px;width:30.5px;height:21.8px;background:#e8e8e8;"></div><div class="a" style="left:42.8px;top:13.7px;width:11.9px;height:8.9px;background:#a8bf5a;"></div><div class="a" style="left:33px;top:28.9px;width:30.6px;height:7px;background:#3b3e46;box-shadow:0 0 1.5px #111;"></div><div class="a" style="left:33.5px;top:32.8px;width:23.5px;height:1.7px;background:#2f6fb5;"></div><div class="a" style="left:4px;top:36px;width:74px;height:1px;background:#3e3e3e;"></div><div class="a" style="left:21.8px;top:37.8px;width:16.2px;height:3.7px;background:#7d5fae;"></div><div class="a" style="left:21.8px;top:41.5px;width:16.2px;height:3.3px;background:#5d556d;"></div><div class="a" style="left:79.3px;top:5.5px;width:0.8px;height:50px;background:#3a3a3a;"></div><div class="a" style="left:83px;top:7px;width:14px;height:1.4px;background:#6a6a6a;"></div><div class="a" style="left:83px;top:12px;width:9px;height:1px;background:#6a6a6a;"></div><div class="a" style="left:83px;top:16px;width:12px;height:1px;background:#6a6a6a;"></div><div class="a" style="left:84px;top:38.5px;width:13px;height:2.2px;background:#6b6b6b;"></div><div class="a" style="left:91.5px;top:3.6px;width:3px;height:1.4px;background:#1473e6;border-radius:1px;"></div><div class="a" style="left:0px;top:55.5px;width:99.7px;height:6.2px;background:linear-gradient(to right,#0c0420,#180838 45%,#3a0a6c 85%,#1c0648);"></div><div class="a" style="left:20.8px;top:56.6px;width:3.7px;height:3.7px;background:#2a8df2;border-radius:1px;"></div><div class="a" style="left:25.55px;top:56.6px;width:3.7px;height:3.7px;background:#c9c3d0;border-radius:1px;"></div><div class="a" style="left:30.3px;top:56.6px;width:3.7px;height:3.7px;background:#ff9800;border-radius:1px;"></div><div class="a" style="left:35.05px;top:56.6px;width:3.7px;height:3.7px;background:#e8e8e8;border-radius:1px;"></div><div class="a" style="left:39.8px;top:56.6px;width:3.7px;height:3.7px;background:#111;border-radius:1px;"></div><div class="a" style="left:44.55px;top:56.6px;width:3.7px;height:3.7px;background:#1fc300;border-radius:1px;"></div><div class="a" style="left:49.3px;top:56.6px;width:3.7px;height:3.7px;background:#2ea6e6;border-radius:1px;"></div><div class="a" style="left:54.05px;top:56.6px;width:3.7px;height:3.7px;background:#1ed760;border-radius:1px;"></div><div class="a" style="left:58.8px;top:56.6px;width:3.7px;height:3.7px;background:#ff6a2a;border-radius:1px;"></div><div class="a" style="left:63.55px;top:56.6px;width:3.7px;height:3.7px;background:#0a2a4a;border-radius:1px;"></div><div class="a" style="left:70.8px;top:56.3px;width:3px;height:4.2px;background:#f2f2f2;"></div><div class="a" style="left:76px;top:56.4px;width:2.6px;height:4px;background:#777;"></div></div></div>
<svg class="a" style="left:2184px;top:1640px;" width="95" height="125" viewBox="0 0 95 125"><defs><linearGradient id="tr" x1="0" y1="0" x2="1" y2="0"><stop offset="0" stop-color="#8f9294"/><stop offset=".12" stop-color="#6d7173"/><stop offset=".38" stop-color="#7f8385"/><stop offset=".62" stop-color="#64686a"/><stop offset=".85" stop-color="#55595b"/><stop offset="1" stop-color="#6e7173"/></linearGradient><linearGradient id="tr2" x1="0" y1="0" x2="0" y2="1"><stop offset="0" stop-color="#fff" stop-opacity=".12"/><stop offset=".35" stop-color="#fff" stop-opacity="0"/><stop offset="1" stop-color="#000" stop-opacity=".12"/></linearGradient></defs><path d="M1 20.500C1 15 21 11.500 47 11.500s46 3.500 46 9L81.500 112c-1 6.500-15 10.500-34.500 10.500S13.500 118.500 12.500 112z" fill="url(#tr)"/><path d="M1 20.500C1 15 21 11.500 47 11.500s46 3.500 46 9L81.500 112c-1 6.500-15 10.500-34.500 10.500S13.500 118.500 12.500 112z" fill="url(#tr2)"/><ellipse cx="47" cy="20.500" rx="45.500" ry="8.500" fill="#4d5053"/><path d="M1 20.500C1 15 21 11.500 47 11.500s46 3.500 46 9" fill="none" stroke="#a4a7a9" stroke-width="1.200"/><path d="M34 52c12-4 24-4 32 0-6 3-22 4-32 0z" fill="#fff" fill-opacity=".13"/><path d="M8 19l-1-9 5 3 4-9 14-3 9 5 6-3 5 6 9-9 12 6 8 4 6 3-3 12c-10 5-30 7-44 6S12 26 8 19z" fill="#e9e9e9"/><path d="M16 4l14-3 9 5-6 12-13-3zM58 0l12 6-4 16-14 2-3-12z" fill="#f7f7f7"/><path d="M12 13l8 2 13 3-5 9-12-4zM49 12l3 12-8 3-6-9zM70 6l8 4 6 3-4 12-14-3z" fill="#cfcfcf"/><path d="M33 18l5 9-6 1zM66 22l-2 6 8-2z" fill="#9c9c9c"/><path d="M30 14l8-3 6 1-2 4-9 2z" fill="#35b8e8"/><path d="M38 11l6 1 1-2-5-1z" fill="#3cc24a"/><path d="M58 12l9-3 5 7-10 5z" fill="#3567b8"/><path d="M60 15l7-1 2 4-7 2z" fill="#e8852a"/><path d="M52 24l3-8 2 9z" fill="#e8852a"/><path d="M26 22l6-1-2 5z" fill="#c0502a"/><path d="M56 26l6-2 2 4z" fill="#4a9a4a"/></svg>
<div class="a" style="left:644px;top:1778px;width:8px;height:8px;background:#a994d1;border-radius:50%;"></div>
<div class="a" style="left:920px;top:1778px;width:8px;height:8px;background:#a994d1;border-radius:50%;"></div>
<div class="a" style="left:1058px;top:1778px;width:8px;height:8px;background:#a994d1;border-radius:50%;"></div>
<div class="a" style="left:1196px;top:1778px;width:8px;height:8px;background:#a994d1;border-radius:50%;"></div>
<div class="a" style="left:1334px;top:1778px;width:8px;height:8px;background:#a994d1;border-radius:50%;"></div>
<div class="a" style="left:1610px;top:1778px;width:8px;height:8px;background:#a994d1;border-radius:50%;"></div>
<div class="a" style="left:1886px;top:1778px;width:8px;height:8px;background:#d58ff0;border-radius:50%;"></div>
</div>
</body></html>
